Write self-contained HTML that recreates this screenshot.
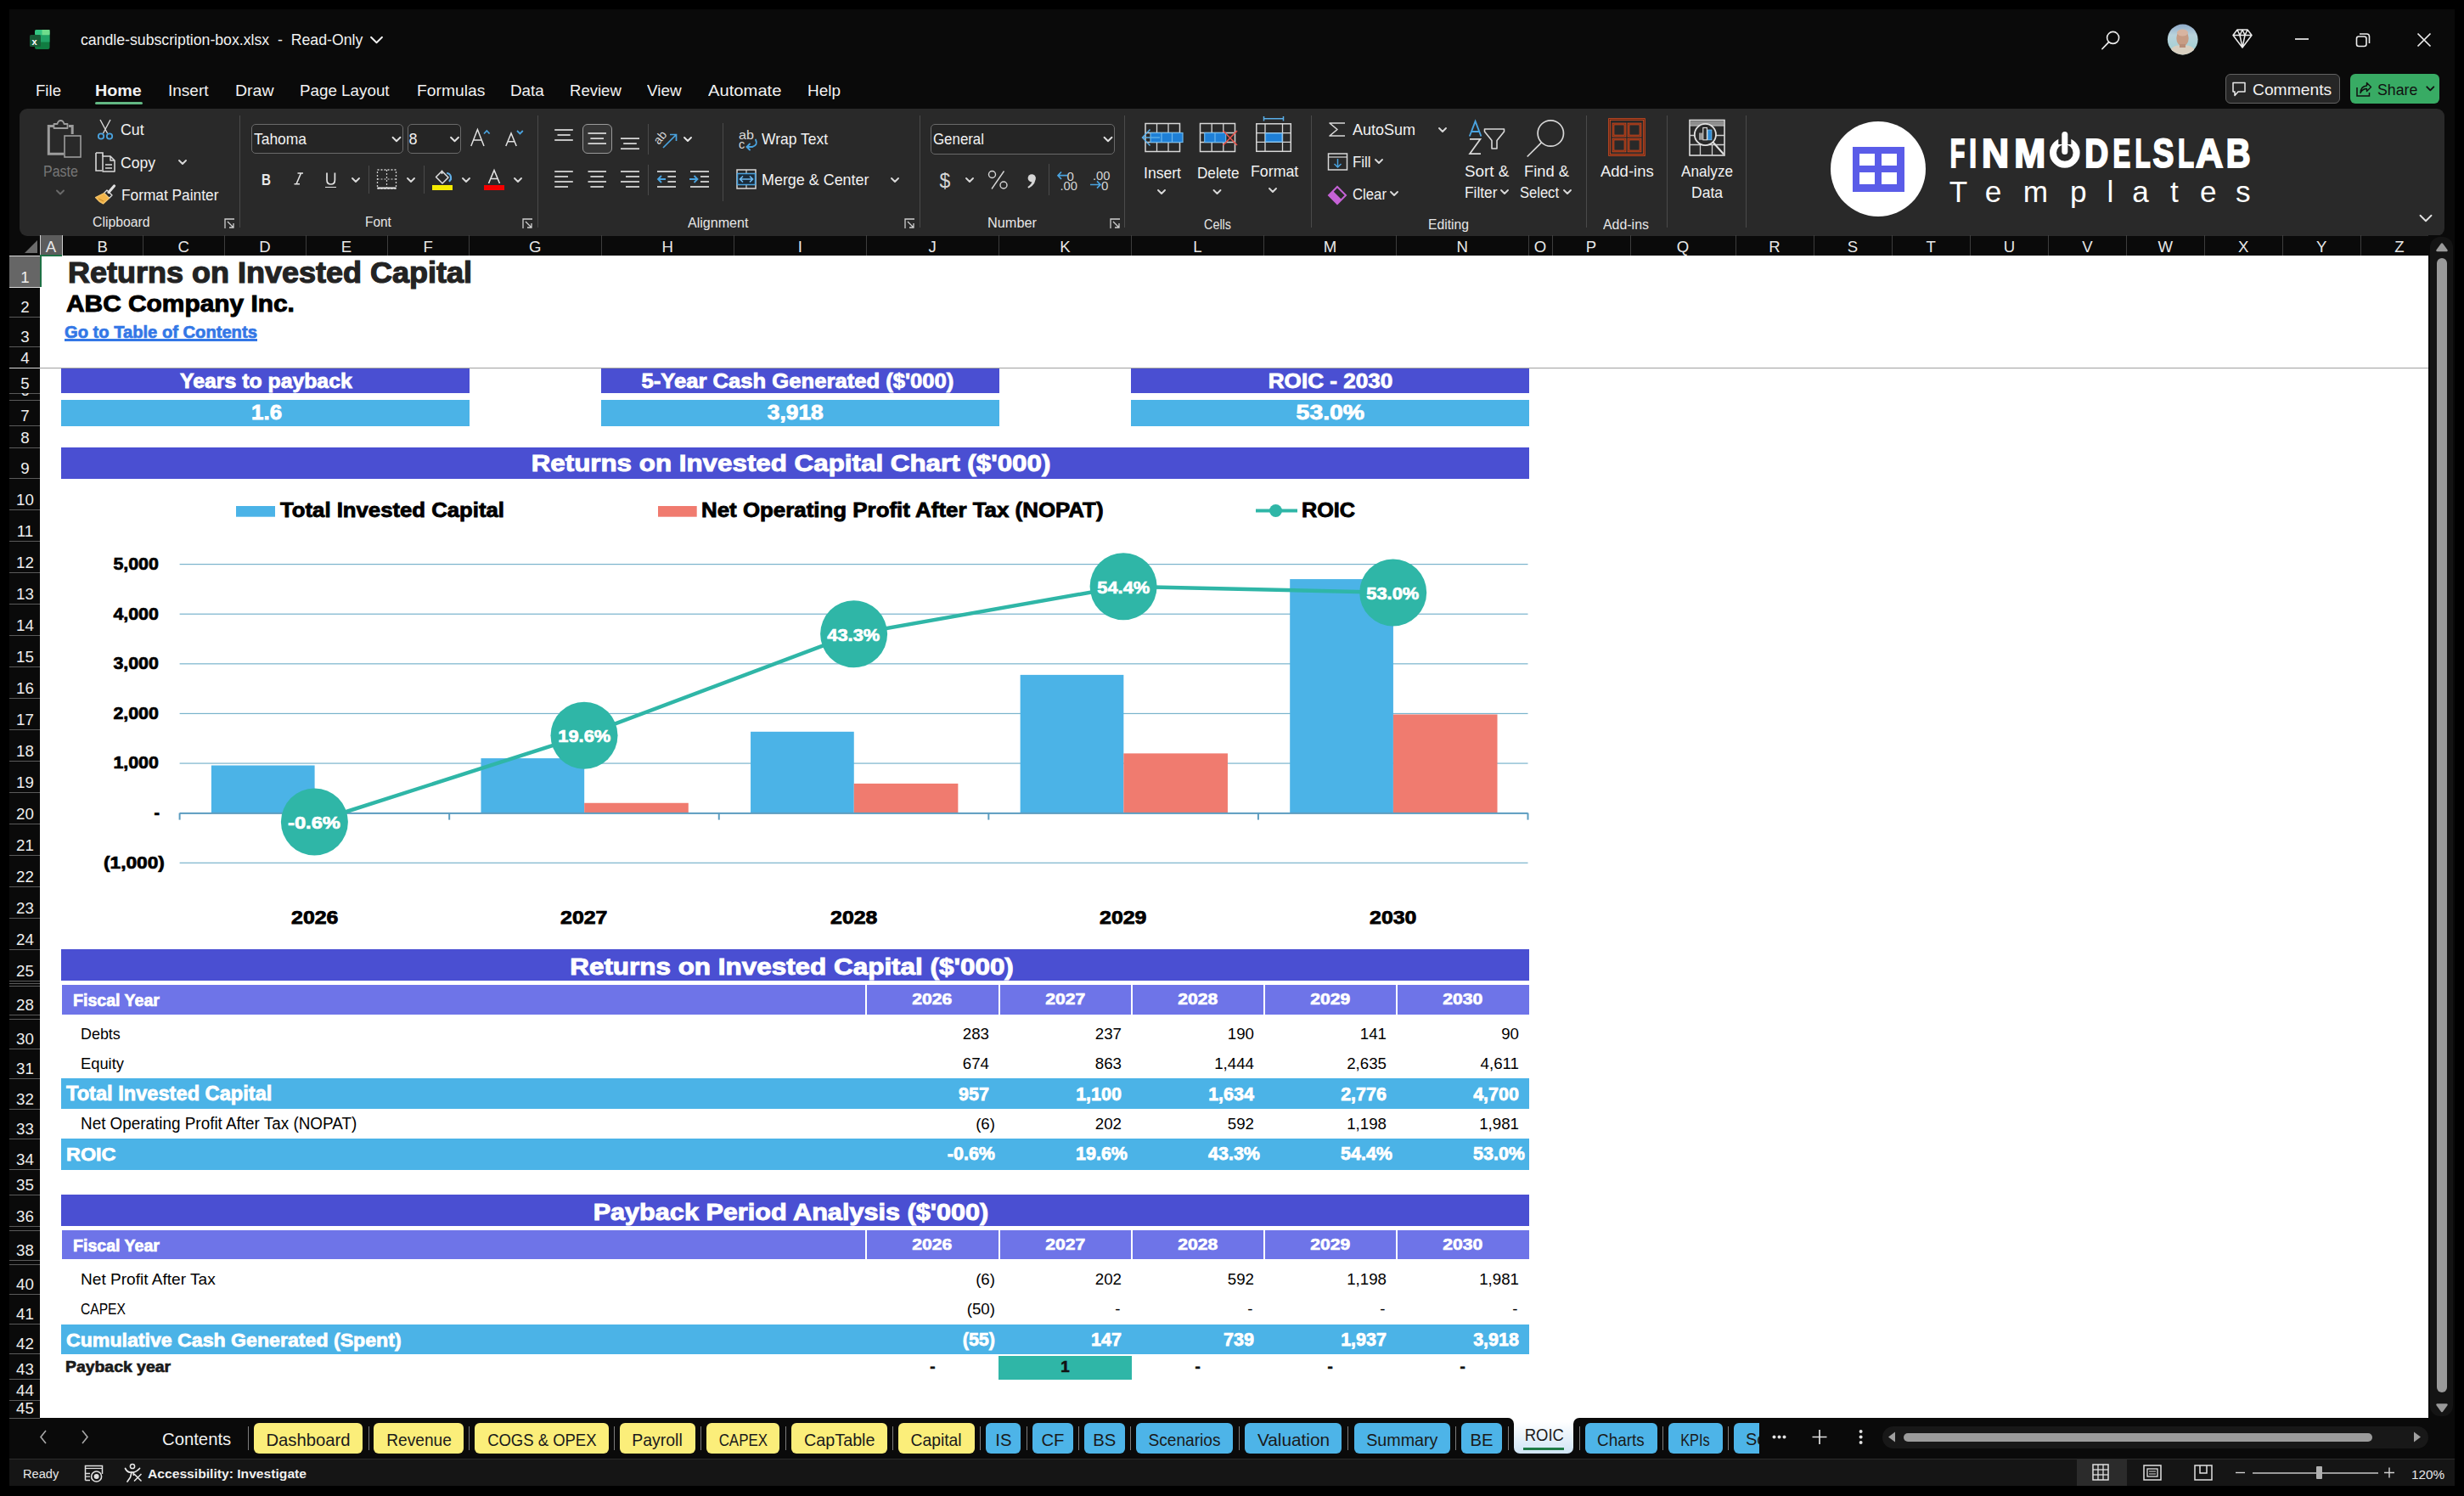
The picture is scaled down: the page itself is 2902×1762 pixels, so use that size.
<!DOCTYPE html>
<html><head><meta charset="utf-8"><title>Excel ROIC</title>
<style>
html,body{margin:0;padding:0;}
body{width:2902px;height:1762px;background:#000;position:relative;overflow:hidden;font-family:"Liberation Sans",sans-serif;}
.t{position:absolute;white-space:pre;line-height:1;}
svg{position:absolute;overflow:visible;}
</style></head><body>

<div style="position:absolute;left:11.00px;top:11.00px;width:2880.00px;height:1739.00px;background:#0a0a0a;"></div>
<div class="t" style="left:95.40px;top:38.87px;font-size:17.88px;color:#f2f2f2;transform:scaleX(0.9904);transform-origin:left 0;">candle-subscription-box.xlsx  -  Read-Only</div>
<div style="position:absolute;left:2621.00px;top:87.20px;width:134.50px;height:35.30px;background:#262626;border:1px solid #626262;border-radius:6px;box-sizing:border-box;"></div>
<div class="t" style="left:2652.60px;top:97.57px;font-size:17.88px;color:#f2f2f2;transform:scaleX(1.0784);transform-origin:left 0;">Comments</div>
<div style="position:absolute;left:2768.40px;top:87.20px;width:104.30px;height:35.30px;background:#38ab64;border-radius:6px;"></div>
<div class="t" style="left:2799.80px;top:97.57px;font-size:17.88px;color:#111111;transform:scaleX(0.9936);transform-origin:left 0;">Share</div>
<div class="t" style="left:42.00px;top:97.28px;font-size:19.27px;color:#f2f2f2;transform:scaleX(0.9659);transform-origin:left 0;">File</div>
<div class="t" style="left:111.60px;top:97.28px;font-size:19.27px;font-weight:700;color:#f2f2f2;transform:scaleX(1.0233);transform-origin:left 0;">Home</div>
<div class="t" style="left:198.00px;top:97.28px;font-size:19.27px;color:#f2f2f2;transform:scaleX(0.9854);transform-origin:left 0;">Insert</div>
<div class="t" style="left:277.00px;top:97.28px;font-size:19.27px;color:#f2f2f2;transform:scaleX(1.0139);transform-origin:left 0;">Draw</div>
<div class="t" style="left:353.00px;top:97.28px;font-size:19.27px;color:#f2f2f2;transform:scaleX(0.9756);transform-origin:left 0;">Page Layout</div>
<div class="t" style="left:491.00px;top:97.28px;font-size:19.27px;color:#f2f2f2;">Formulas</div>
<div class="t" style="left:600.60px;top:97.28px;font-size:19.27px;color:#f2f2f2;transform:scaleX(0.9776);transform-origin:left 0;">Data</div>
<div class="t" style="left:670.50px;top:97.28px;font-size:19.27px;color:#f2f2f2;transform:scaleX(0.9621);transform-origin:left 0;">Review</div>
<div class="t" style="left:762.00px;top:97.28px;font-size:19.27px;color:#f2f2f2;transform:scaleX(0.9824);transform-origin:left 0;">View</div>
<div class="t" style="left:834.00px;top:97.28px;font-size:19.27px;color:#f2f2f2;transform:scaleX(1.0485);transform-origin:left 0;">Automate</div>
<div class="t" style="left:951.00px;top:97.28px;font-size:19.27px;color:#f2f2f2;transform:scaleX(0.9838);transform-origin:left 0;">Help</div>
<div style="position:absolute;left:111.60px;top:120.00px;width:56.80px;height:2.80px;background:#62b783;border-radius:2px;"></div>
<div style="position:absolute;left:23.00px;top:128.00px;width:2855.50px;height:149.90px;background:#292929;border-radius:9px;"></div>
<div class="t" style="left:51.00px;top:194.37px;font-size:17.88px;color:#767676;transform:scaleX(0.8969);transform-origin:left 0;">Paste</div>
<div class="t" style="left:142.00px;top:143.65px;font-size:18.02px;color:#f2f2f2;transform:scaleX(0.9844);transform-origin:left 0;">Cut</div>
<div class="t" style="left:142.00px;top:182.75px;font-size:18.02px;color:#f2f2f2;transform:scaleX(0.9748);transform-origin:left 0;">Copy</div>
<div class="t" style="left:142.60px;top:221.25px;font-size:18.02px;color:#f2f2f2;transform:scaleX(0.9601);transform-origin:left 0;">Format Painter</div>
<div class="t" style="left:109.00px;top:254.34px;font-size:15.78px;color:#e6e6e6;">Clipboard</div>
<div style="position:absolute;left:282.20px;top:135.60px;width:1.00px;height:132.10px;background:#4a4a4a;"></div>
<div style="position:absolute;left:295.50px;top:146.00px;width:179.50px;height:35.00px;background:#252525;border:1px solid #6a6a6a;border-radius:5px;box-sizing:border-box;"></div>
<div class="t" style="left:299.00px;top:154.75px;font-size:18.02px;color:#f2f2f2;transform:scaleX(0.9673);transform-origin:left 0;">Tahoma</div>
<div style="position:absolute;left:479.50px;top:146.00px;width:63.50px;height:35.00px;background:#252525;border:1px solid #6a6a6a;border-radius:5px;box-sizing:border-box;"></div>
<div class="t" style="left:481.50px;top:154.75px;font-size:18.02px;color:#f2f2f2;">8</div>
<div class="t" style="left:308.00px;top:203.62px;font-size:17.46px;font-weight:700;color:#e8e8e8;transform:scaleX(0.8725);transform-origin:left 0;">B</div>
<div style="position:absolute;left:383.30px;top:219.50px;width:13.20px;height:1.80px;background:#e2e2e2;"></div>
<div style="position:absolute;left:434.20px;top:195.00px;width:1.00px;height:33.00px;background:#4a4a4a;"></div>
<div style="position:absolute;left:498.50px;top:195.00px;width:1.00px;height:33.00px;background:#4a4a4a;"></div>
<div style="position:absolute;left:508.70px;top:218.00px;width:24.20px;height:5.80px;background:#f5eb00;"></div>
<div style="position:absolute;left:569.80px;top:218.00px;width:24.20px;height:5.80px;background:#f40000;"></div>
<div class="t" style="left:430.00px;top:254.34px;font-size:15.78px;color:#e6e6e6;transform:scaleX(0.9753);transform-origin:left 0;">Font</div>
<div style="position:absolute;left:633.00px;top:135.60px;width:1.00px;height:132.10px;background:#4a4a4a;"></div>
<div style="position:absolute;left:685.50px;top:146.20px;width:35.50px;height:35.20px;background:#363636;border:1px solid #9a9a9a;border-radius:6px;box-sizing:border-box;"></div>
<div style="position:absolute;left:763.00px;top:145.70px;width:1.00px;height:36.30px;background:#4a4a4a;"></div>
<div style="position:absolute;left:763.00px;top:194.00px;width:1.00px;height:36.00px;background:#4a4a4a;"></div>
<div style="position:absolute;left:851.10px;top:145.00px;width:1.00px;height:92.00px;background:#4a4a4a;"></div>
<div class="t" style="left:897.00px;top:155.13px;font-size:18.16px;color:#f2f2f2;transform:scaleX(0.9621);transform-origin:left 0;">Wrap Text</div>
<div class="t" style="left:897.00px;top:203.13px;font-size:18.16px;color:#f2f2f2;transform:scaleX(0.9870);transform-origin:left 0;">Merge &amp; Center</div>
<div class="t" style="left:810.00px;top:255.14px;font-size:15.78px;color:#e6e6e6;transform:scaleX(1.0188);transform-origin:left 0;">Alignment</div>
<div style="position:absolute;left:1082.50px;top:135.60px;width:1.00px;height:132.10px;background:#4a4a4a;"></div>
<div style="position:absolute;left:1096.00px;top:146.00px;width:217.00px;height:36.00px;background:#252525;border:1px solid #6a6a6a;border-radius:5px;box-sizing:border-box;"></div>
<div class="t" style="left:1099.00px;top:154.75px;font-size:18.02px;color:#f2f2f2;transform:scaleX(0.9361);transform-origin:left 0;">General</div>
<div style="position:absolute;left:1234.50px;top:193.00px;width:1.00px;height:37.00px;background:#4a4a4a;"></div>
<div class="t" style="left:1163.00px;top:254.64px;font-size:15.78px;color:#e6e6e6;transform:scaleX(1.0333);transform-origin:left 0;">Number</div>
<div style="position:absolute;left:1324.20px;top:135.60px;width:1.00px;height:132.10px;background:#4a4a4a;"></div>
<div class="t" style="left:1347.00px;top:194.75px;font-size:18.02px;color:#f2f2f2;transform:scaleX(0.9765);transform-origin:left 0;">Insert</div>
<div class="t" style="left:1409.50px;top:194.75px;font-size:18.02px;color:#f2f2f2;transform:scaleX(0.9504);transform-origin:left 0;">Delete</div>
<div class="t" style="left:1472.70px;top:193.05px;font-size:18.02px;color:#f2f2f2;transform:scaleX(0.9867);transform-origin:left 0;">Format</div>
<div class="t" style="left:1418.00px;top:256.64px;font-size:15.78px;color:#e6e6e6;transform:scaleX(0.9122);transform-origin:left 0;">Cells</div>
<div style="position:absolute;left:1544.00px;top:135.60px;width:1.00px;height:132.10px;background:#4a4a4a;"></div>
<div class="t" style="left:1593.00px;top:143.75px;font-size:18.02px;color:#f2f2f2;">AutoSum</div>
<div class="t" style="left:1593.00px;top:182.25px;font-size:18.02px;color:#f2f2f2;transform:scaleX(0.9385);transform-origin:left 0;">Fill</div>
<div class="t" style="left:1593.00px;top:219.75px;font-size:18.02px;color:#f2f2f2;transform:scaleX(0.9290);transform-origin:left 0;">Clear</div>
<div class="t" style="left:1724.70px;top:192.75px;font-size:18.02px;color:#f2f2f2;transform:scaleX(1.0446);transform-origin:left 0;">Sort &amp;</div>
<div class="t" style="left:1724.70px;top:217.75px;font-size:18.02px;color:#f2f2f2;transform:scaleX(0.9616);transform-origin:left 0;">Filter</div>
<div class="t" style="left:1795.00px;top:192.75px;font-size:18.02px;color:#f2f2f2;transform:scaleX(1.0178);transform-origin:left 0;">Find &amp;</div>
<div class="t" style="left:1790.00px;top:217.75px;font-size:18.02px;color:#f2f2f2;transform:scaleX(0.9186);transform-origin:left 0;">Select</div>
<div class="t" style="left:1682.00px;top:256.64px;font-size:15.78px;color:#e6e6e6;transform:scaleX(0.9947);transform-origin:left 0;">Editing</div>
<div style="position:absolute;left:1867.90px;top:135.60px;width:1.00px;height:132.10px;background:#4a4a4a;"></div>
<div class="t" style="left:1885.00px;top:192.75px;font-size:18.02px;color:#f2f2f2;transform:scaleX(1.0264);transform-origin:left 0;">Add-ins</div>
<div class="t" style="left:1887.50px;top:256.64px;font-size:15.78px;color:#e6e6e6;transform:scaleX(1.0091);transform-origin:left 0;">Add-ins</div>
<div style="position:absolute;left:1963.20px;top:135.60px;width:1.00px;height:132.10px;background:#4a4a4a;"></div>
<div class="t" style="left:1980.00px;top:192.75px;font-size:18.02px;color:#f2f2f2;transform:scaleX(0.9517);transform-origin:left 0;">Analyze</div>
<div class="t" style="left:1992.00px;top:217.75px;font-size:18.02px;color:#f2f2f2;transform:scaleX(0.9722);transform-origin:left 0;">Data</div>
<div style="position:absolute;left:2056.10px;top:135.60px;width:1.00px;height:132.10px;background:#4a4a4a;"></div>
<div class="t" style="left:2290.65px;top:156.80px;font-size:47.49px;font-weight:700;color:#fff;transform:scaleX(0.6033);transform-origin:center 0;-webkit-text-stroke:2.1px #fff;">F</div>
<div class="t" style="left:2316.75px;top:156.80px;font-size:47.49px;font-weight:700;color:#fff;transform:scaleX(0.6594);transform-origin:center 0;-webkit-text-stroke:2.1px #fff;">I</div>
<div class="t" style="left:2332.70px;top:156.80px;font-size:47.49px;font-weight:700;color:#fff;transform:scaleX(0.9360);transform-origin:center 0;-webkit-text-stroke:2.1px #fff;">N</div>
<div class="t" style="left:2370.67px;top:156.80px;font-size:47.49px;font-weight:700;color:#fff;transform:scaleX(0.9328);transform-origin:center 0;-webkit-text-stroke:2.1px #fff;">M</div>
<div class="t" style="left:2451.55px;top:156.80px;font-size:47.49px;font-weight:700;color:#fff;transform:scaleX(0.8165);transform-origin:center 0;-webkit-text-stroke:2.1px #fff;">D</div>
<div class="t" style="left:2483.31px;top:156.80px;font-size:47.49px;font-weight:700;color:#fff;transform:scaleX(0.6536);transform-origin:center 0;-webkit-text-stroke:2.1px #fff;">E</div>
<div class="t" style="left:2509.40px;top:156.80px;font-size:47.49px;font-weight:700;color:#fff;transform:scaleX(0.6274);transform-origin:center 0;-webkit-text-stroke:2.1px #fff;">L</div>
<div class="t" style="left:2531.56px;top:156.80px;font-size:47.49px;font-weight:700;color:#fff;transform:scaleX(0.7830);transform-origin:center 0;-webkit-text-stroke:2.1px #fff;">S</div>
<div class="t" style="left:2560.00px;top:156.80px;font-size:47.49px;font-weight:700;color:#fff;transform:scaleX(0.6550);transform-origin:center 0;-webkit-text-stroke:2.1px #fff;">L</div>
<div class="t" style="left:2585.00px;top:156.80px;font-size:47.49px;font-weight:700;color:#fff;transform:scaleX(0.9419);transform-origin:center 0;-webkit-text-stroke:2.1px #fff;">A</div>
<div class="t" style="left:2619.25px;top:156.80px;font-size:47.49px;font-weight:700;color:#fff;transform:scaleX(0.8398);transform-origin:center 0;-webkit-text-stroke:2.1px #fff;">B</div>
<div class="t" style="left:2295.65px;top:207.61px;font-size:35.20px;color:#fff;">T</div>
<div class="t" style="left:2337.71px;top:207.61px;font-size:35.20px;color:#fff;">e</div>
<div class="t" style="left:2382.64px;top:207.61px;font-size:35.20px;color:#fff;">m</div>
<div class="t" style="left:2437.91px;top:207.61px;font-size:35.20px;color:#fff;">p</div>
<div class="t" style="left:2481.49px;top:207.61px;font-size:35.20px;color:#fff;">l</div>
<div class="t" style="left:2511.21px;top:207.61px;font-size:35.20px;color:#fff;">a</div>
<div class="t" style="left:2556.01px;top:207.61px;font-size:35.20px;color:#fff;">t</div>
<div class="t" style="left:2590.91px;top:207.61px;font-size:35.20px;color:#fff;">e</div>
<div class="t" style="left:2632.90px;top:207.61px;font-size:35.20px;color:#fff;">s</div>
<div style="position:absolute;left:2860.00px;top:277.00px;width:31.00px;height:1393.00px;background:#0a0a0a;"></div>
<div style="position:absolute;left:2862.00px;top:279.00px;width:27.00px;height:1389.00px;background:#141414;border-radius:12px;"></div>
<div style="position:absolute;left:2870.00px;top:304.00px;width:12.00px;height:1336.00px;background:#9a9a9a;border-radius:6px;"></div>
<div style="position:absolute;left:1760.00px;top:1664.00px;width:120.00px;height:26.00px;background:#ffffff;"></div>
<div style="position:absolute;left:11.00px;top:1670.00px;width:1771.80px;height:48.00px;background:#0a0a0a;border-top-right-radius:7px;"></div>
<div style="position:absolute;left:1853.40px;top:1670.00px;width:1037.60px;height:48.00px;background:#0a0a0a;border-top-left-radius:7px;"></div>
<div style="position:absolute;left:1770.00px;top:1700.00px;width:96.00px;height:18.00px;background:#0a0a0a;"></div>
<div class="t" style="left:190.70px;top:1685.89px;font-size:19.97px;color:#f2f2f2;transform:scaleX(1.0170);transform-origin:left 0;">Contents</div>
<div style="position:absolute;left:292.00px;top:1680.00px;width:1.00px;height:28.00px;background:#7c7c7c;"></div>
<div style="position:absolute;left:299.00px;top:1676.00px;width:128.00px;height:35.50px;background:#fbee7a;border-radius:6px;"></div>
<div class="t" style="left:313.46px;top:1685.56px;font-size:20.25px;color:#1a1a1a;">Dashboard</div>
<div style="position:absolute;left:434.00px;top:1680.00px;width:1.00px;height:28.00px;background:#7c7c7c;"></div>
<div style="position:absolute;left:440.30px;top:1676.00px;width:105.60px;height:35.50px;background:#fbee7a;border-radius:6px;"></div>
<div class="t" style="left:452.57px;top:1685.56px;font-size:20.25px;color:#1a1a1a;transform:scaleX(0.9449);transform-origin:center 0;">Revenue</div>
<div style="position:absolute;left:552.00px;top:1680.00px;width:1.00px;height:28.00px;background:#7c7c7c;"></div>
<div style="position:absolute;left:559.30px;top:1676.00px;width:157.40px;height:35.50px;background:#fbee7a;border-radius:6px;"></div>
<div class="t" style="left:567.66px;top:1685.56px;font-size:20.25px;color:#1a1a1a;transform:scaleX(0.9127);transform-origin:center 0;">COGS &amp; OPEX</div>
<div style="position:absolute;left:723.00px;top:1680.00px;width:1.00px;height:28.00px;background:#7c7c7c;"></div>
<div style="position:absolute;left:730.00px;top:1676.00px;width:88.60px;height:35.50px;background:#fbee7a;border-radius:6px;"></div>
<div class="t" style="left:743.35px;top:1685.56px;font-size:20.25px;color:#1a1a1a;transform:scaleX(0.9628);transform-origin:center 0;">Payroll</div>
<div style="position:absolute;left:825.00px;top:1680.00px;width:1.00px;height:28.00px;background:#7c7c7c;"></div>
<div style="position:absolute;left:832.00px;top:1676.00px;width:86.40px;height:35.50px;background:#fbee7a;border-radius:6px;"></div>
<div class="t" style="left:840.87px;top:1685.56px;font-size:20.25px;color:#1a1a1a;transform:scaleX(0.8361);transform-origin:center 0;">CAPEX</div>
<div style="position:absolute;left:925.00px;top:1680.00px;width:1.00px;height:28.00px;background:#7c7c7c;"></div>
<div style="position:absolute;left:932.20px;top:1676.00px;width:112.40px;height:35.50px;background:#fbee7a;border-radius:6px;"></div>
<div class="t" style="left:945.62px;top:1685.56px;font-size:20.25px;color:#1a1a1a;transform:scaleX(0.9747);transform-origin:center 0;">CapTable</div>
<div style="position:absolute;left:1051.00px;top:1680.00px;width:1.00px;height:28.00px;background:#7c7c7c;"></div>
<div style="position:absolute;left:1058.40px;top:1676.00px;width:89.20px;height:35.50px;background:#fbee7a;border-radius:6px;"></div>
<div class="t" style="left:1071.48px;top:1685.56px;font-size:20.25px;color:#1a1a1a;transform:scaleX(0.9549);transform-origin:center 0;">Capital</div>
<div style="position:absolute;left:1154.00px;top:1680.00px;width:1.00px;height:28.00px;background:#7c7c7c;"></div>
<div style="position:absolute;left:1161.40px;top:1676.00px;width:41.00px;height:35.50px;background:#4db4e8;border-radius:6px;"></div>
<div class="t" style="left:1172.33px;top:1685.56px;font-size:20.25px;color:#1a1a1a;">IS</div>
<div style="position:absolute;left:1209.00px;top:1680.00px;width:1.00px;height:28.00px;background:#7c7c7c;"></div>
<div style="position:absolute;left:1216.20px;top:1676.00px;width:47.50px;height:35.50px;background:#4db4e8;border-radius:6px;"></div>
<div class="t" style="left:1226.45px;top:1685.56px;font-size:20.25px;color:#1a1a1a;">CF</div>
<div style="position:absolute;left:1270.00px;top:1680.00px;width:1.00px;height:28.00px;background:#7c7c7c;"></div>
<div style="position:absolute;left:1277.00px;top:1676.00px;width:47.60px;height:35.50px;background:#4db4e8;border-radius:6px;"></div>
<div class="t" style="left:1287.29px;top:1685.56px;font-size:20.25px;color:#1a1a1a;">BS</div>
<div style="position:absolute;left:1331.00px;top:1680.00px;width:1.00px;height:28.00px;background:#7c7c7c;"></div>
<div style="position:absolute;left:1338.40px;top:1676.00px;width:114.00px;height:35.50px;background:#4db4e8;border-radius:6px;"></div>
<div class="t" style="left:1350.37px;top:1685.56px;font-size:20.25px;color:#1a1a1a;transform:scaleX(0.9439);transform-origin:center 0;">Scenarios</div>
<div style="position:absolute;left:1459.00px;top:1680.00px;width:1.00px;height:28.00px;background:#7c7c7c;"></div>
<div style="position:absolute;left:1466.20px;top:1676.00px;width:114.10px;height:35.50px;background:#4db4e8;border-radius:6px;"></div>
<div class="t" style="left:1481.78px;top:1685.56px;font-size:20.25px;color:#1a1a1a;transform:scaleX(1.0260);transform-origin:center 0;">Valuation</div>
<div style="position:absolute;left:1587.00px;top:1680.00px;width:1.00px;height:28.00px;background:#7c7c7c;"></div>
<div style="position:absolute;left:1594.50px;top:1676.00px;width:113.20px;height:35.50px;background:#4db4e8;border-radius:6px;"></div>
<div class="t" style="left:1607.78px;top:1685.56px;font-size:20.25px;color:#1a1a1a;transform:scaleX(0.9718);transform-origin:center 0;">Summary</div>
<div style="position:absolute;left:1714.00px;top:1680.00px;width:1.00px;height:28.00px;background:#7c7c7c;"></div>
<div style="position:absolute;left:1721.00px;top:1676.00px;width:48.00px;height:35.50px;background:#4db4e8;border-radius:6px;"></div>
<div class="t" style="left:1731.49px;top:1685.56px;font-size:20.25px;color:#1a1a1a;">BE</div>
<div style="position:absolute;left:1776.00px;top:1680.00px;width:1.00px;height:28.00px;background:#7c7c7c;"></div>
<div style="position:absolute;left:1782.80px;top:1668.00px;width:70.60px;height:44.00px;background:linear-gradient(#ffffff 15%,#cfe4f5);border-radius:0 0 7px 7px;"></div>
<div class="t" style="left:1793.71px;top:1680.91px;font-size:19.83px;color:#1a1a1a;transform:scaleX(0.9318);transform-origin:center 0;">ROIC</div>
<div style="position:absolute;left:1794.00px;top:1705.00px;width:48.00px;height:3.20px;background:#1e7b45;"></div>
<div style="position:absolute;left:1860.00px;top:1680.00px;width:1.00px;height:28.00px;background:#7c7c7c;"></div>
<div style="position:absolute;left:1867.00px;top:1676.00px;width:84.60px;height:35.50px;background:#4db4e8;border-radius:6px;"></div>
<div class="t" style="left:1879.48px;top:1685.56px;font-size:20.25px;color:#1a1a1a;transform:scaleX(0.9321);transform-origin:center 0;">Charts</div>
<div style="position:absolute;left:1958.00px;top:1680.00px;width:1.00px;height:28.00px;background:#7c7c7c;"></div>
<div style="position:absolute;left:1965.00px;top:1676.00px;width:63.50px;height:35.50px;background:#4db4e8;border-radius:6px;"></div>
<div class="t" style="left:1975.37px;top:1685.56px;font-size:20.25px;color:#1a1a1a;transform:scaleX(0.8067);transform-origin:center 0;">KPIs</div>
<div style="position:absolute;left:2035.00px;top:1680.00px;width:1.00px;height:28.00px;background:#7c7c7c;"></div>
<div style="position:absolute;left:2042px;top:1676px;width:29.6px;height:35.5px;overflow:hidden;border-radius:6px 0 0 6px;background:#4db4e8">
<div class="t" style="left:14.00px;top:9.89px;font-size:19.97px;color:#1a1a1a;">Scorecard</div>
</div>
<div style="position:absolute;left:2217.00px;top:1680.00px;width:643.00px;height:25.50px;background:#181818;border-radius:13px;"></div>
<div style="position:absolute;left:2242.00px;top:1687.60px;width:551.60px;height:10.80px;background:#9b9b9b;border-radius:6px;"></div>
<div style="position:absolute;left:11.00px;top:1718.00px;width:2880.00px;height:32.00px;background:#151515;"></div>
<div style="position:absolute;left:11.00px;top:1718.00px;width:2880.00px;height:1.00px;background:#2c2c2c;"></div>
<div class="t" style="left:27.40px;top:1727.93px;font-size:15.08px;color:#e8e8e8;transform:scaleX(0.9678);transform-origin:left 0;">Ready</div>
<div class="t" style="left:173.50px;top:1727.93px;font-size:15.08px;font-weight:700;color:#f0f0f0;transform:scaleX(1.0380);transform-origin:left 0;">Accessibility: Investigate</div>
<div style="position:absolute;left:2445.60px;top:1718.00px;width:59.00px;height:32.00px;background:#2b2b2b;"></div>
<div style="position:absolute;left:2652.70px;top:1734.00px;width:148.30px;height:1.50px;background:#9a9a9a;"></div>
<div style="position:absolute;left:2728.00px;top:1727.00px;width:7.00px;height:15.00px;background:#b0b0b0;border-radius:1px;"></div>
<div class="t" style="left:2839.80px;top:1728.73px;font-size:15.08px;color:#e8e8e8;transform:scaleX(1.0161);transform-origin:left 0;">120%</div>
<svg style="left:0;top:0" width="2902" height="1762"><rect x="41" y="35" width="17.5" height="23" rx="2" fill="#107c41"/>
<rect x="41" y="35" width="17.5" height="6.5" rx="2" fill="#33c481"/>
<rect x="49.5" y="35" width="9" height="6.5" fill="#6fdc8c"/>
<rect x="41" y="41.5" width="17.5" height="8" fill="#21a366"/>
<rect x="35" y="41" width="13" height="14" rx="1.5" fill="#185c37"/>
<text x="37.6" y="52.5" font-family="Liberation Sans" font-weight="700" font-size="11" fill="#fff">x</text>
<polyline points="437.0,43.8 443.5,50.2 450.0,43.8" fill="none" stroke="#f2f2f2" stroke-width="1.9" stroke-linecap="round" stroke-linejoin="round"/>
<circle cx="2488.6" cy="44.4" r="7" fill="none" stroke="#ececec" stroke-width="1.6"/>
<line x1="2483.6" y1="49.6" x2="2476" y2="57.5" stroke="#ececec" stroke-width="1.8" stroke-linecap="round"/>
<defs><clipPath id="avc"><circle cx="2570.7" cy="46.5" r="17.9"/></clipPath><linearGradient id="avbg" x1="0" y1="0" x2="0" y2="1"><stop offset="0" stop-color="#8ea9c9"/><stop offset="0.35" stop-color="#b9d3dc"/><stop offset="1" stop-color="#9ccfd0"/></linearGradient></defs>
<g clip-path="url(#avc)"><rect x="2552" y="28" width="38" height="38" fill="url(#avbg)"/>
<ellipse cx="2570.5" cy="45" rx="7.2" ry="9.5" fill="#c79c84"/><ellipse cx="2570.5" cy="38.5" rx="6.5" ry="4" fill="#d8b4a0"/>
<path d="M2552,66 Q2556,55 2564,53.5 L2577,53.5 Q2585,55 2589,66 Z" fill="#d9cfc0"/><rect x="2567" y="52" width="7" height="4" fill="#b88d77"/></g>
<path d="M2630,41.5 L2635,35 L2647,35 L2652,41.5 L2641,56 Z M2630,41.5 L2652,41.5 M2635,35 L2638,41.5 L2641,35 L2644,41.5 L2647,35 M2638,41.5 L2641,56 L2644,41.5" fill="none" stroke="#ececec" stroke-width="1.5" stroke-linejoin="round"/>
<line x1="2703" y1="46" x2="2719" y2="46" stroke="#ececec" stroke-width="1.7"/>
<rect x="2775.5" y="43" width="11.5" height="11.5" rx="2.5" fill="none" stroke="#ececec" stroke-width="1.6"/>
<path d="M2779,40 L2787.5,40 Q2790.5,40 2790.5,43 L2790.5,51" fill="none" stroke="#ececec" stroke-width="1.6"/>
<path d="M2847.5,39.5 L2862.5,54.5 M2862.5,39.5 L2847.5,54.5" stroke="#ececec" stroke-width="1.7"/>
<path d="M2630,97.5 L2644,97.5 L2644,108 L2636,108 L2632,112.5 L2632,108 L2630,108 Z" fill="none" stroke="#eaeaea" stroke-width="1.5" stroke-linejoin="round"/>
<path d="M2776,103 L2776,113 L2790.5,113 L2790.5,109" fill="none" stroke="#111" stroke-width="1.5"/>
<path d="M2780,109.5 Q2780.5,101.5 2787.5,101 L2787.5,97.5 L2792.5,102.5 L2787.5,107.5 L2787.5,104.5 Q2782.5,104.5 2780,109.5Z" fill="none" stroke="#111" stroke-width="1.4" stroke-linejoin="round"/>
<polyline points="2858.3,102.3 2862.3,106.3 2866.3,102.3" fill="none" stroke="#111" stroke-width="1.9" stroke-linecap="round" stroke-linejoin="round"/>
<path d="M63,148.5 L57.3,148.5 L57.3,181.3 L75,181.3" fill="none" stroke="#9c9c9c" stroke-width="3"/>
<path d="M81,148.5 L85.2,148.5 L85.2,158" fill="none" stroke="#9c9c9c" stroke-width="3"/>
<path d="M63.5,151 L63.5,146 L67.5,146 Q68.5,142 71.5,142 Q74.5,142 75.5,146 L79.5,146 L79.5,151 Z" fill="none" stroke="#9c9c9c" stroke-width="1.8" stroke-linejoin="round"/>
<rect x="76" y="160" width="19" height="25" fill="none" stroke="#9c9c9c" stroke-width="1.6"/>
<polyline points="67.0,224.5 71.0,228.5 75.0,224.5" fill="none" stroke="#6a6a6a" stroke-width="1.9" stroke-linecap="round" stroke-linejoin="round"/>
<path d="M118,141 L126.5,157 M130,141 L121.5,157" stroke="#d9d9d9" stroke-width="1.4"/>
<circle cx="119" cy="160.5" r="3.2" fill="none" stroke="#4aa3df" stroke-width="1.8"/><circle cx="129" cy="160.5" r="3.2" fill="none" stroke="#4aa3df" stroke-width="1.8"/>
<path d="M113,180 L121,180 L121,184 M113,180 L113,201 L120,201" fill="none" stroke="#d9d9d9" stroke-width="1.6"/>
<path d="M121,184 L130,184 L135,189 L135,202 L121,202 Z M130,184 L130,189 L135,189 M124,194 L132,194 M124,198 L132,198" fill="none" stroke="#d9d9d9" stroke-width="1.5" stroke-linejoin="round"/>
<polyline points="211.0,189.0 215.0,193.0 219.0,189.0" fill="none" stroke="#d9d9d9" stroke-width="1.9" stroke-linecap="round" stroke-linejoin="round"/>
<path d="M134.5,219 L128,226.5" stroke="#e0e0e0" stroke-width="3.2" stroke-linecap="round"/>
<path d="M126,224 L132,230 L128.5,233.5 L122.5,227.5 Z" fill="none" stroke="#e0e0e0" stroke-width="1.4" stroke-linejoin="round"/>
<path d="M122.5,227.5 L128.5,233.5 L121.5,240 Q117,238 112.5,232.5 Z" fill="#f3b54a" stroke="#f3c46a" stroke-width="1.2" stroke-linejoin="round"/>
<path d="M116,234 L122,237" stroke="#c78a2a" stroke-width="1"/>
<path d="M265,269 L265,258 L276,258 M268,261 L275,268 M275,263 L275,268 L270,268" fill="none" stroke="#cfcfcf" stroke-width="1.3"/>
<polyline points="462.5,161.8 467.0,166.2 471.5,161.8" fill="none" stroke="#e0e0e0" stroke-width="1.9" stroke-linecap="round" stroke-linejoin="round"/>
<polyline points="531.0,161.8 535.5,166.2 540.0,161.8" fill="none" stroke="#e0e0e0" stroke-width="1.9" stroke-linecap="round" stroke-linejoin="round"/>
<path d="M554.8,172 L562.4,152.5 L570,172 M557.6,165 L567.2,165" fill="none" stroke="#e2e2e2" stroke-width="1.5"/>
<polyline points="570,157.5 573.3,154 576.6,157.5" fill="none" stroke="#4aa3df" stroke-width="1.8"/>
<path d="M595.8,172 L602,157 L608.2,172 M598,166.8 L606,166.8" fill="none" stroke="#e2e2e2" stroke-width="1.5"/>
<polyline points="609,154 612.4,157.5 615.8,154" fill="none" stroke="#4aa3df" stroke-width="1.8"/>
<path d="M350.5,204 L357,204 M346.5,216.8 L353,216.8 M354.5,204 L349,216.8" fill="none" stroke="#e2e2e2" stroke-width="1.6"/>
<path d="M385,203.5 L385,212 Q385,217 389.7,217 Q394.4,217 394.4,212 L394.4,203.5" fill="none" stroke="#e2e2e2" stroke-width="1.7"/>
<polyline points="415.0,210.0 419.0,214.0 423.0,210.0" fill="none" stroke="#d9d9d9" stroke-width="1.9" stroke-linecap="round" stroke-linejoin="round"/>
<rect x="444.5" y="200" width="22" height="22" fill="none" stroke="#cfcfcf" stroke-width="1.3" stroke-dasharray="2,2"/>
<line x1="444.5" y1="221.5" x2="466.5" y2="221.5" stroke="#e8e8e8" stroke-width="2"/>
<line x1="455.5" y1="200" x2="455.5" y2="222" stroke="#cfcfcf" stroke-width="1.2" stroke-dasharray="2,2"/><line x1="444.5" y1="211" x2="466.5" y2="211" stroke="#cfcfcf" stroke-width="1.2" stroke-dasharray="2,2"/>
<polyline points="480.0,210.0 484.0,214.0 488.0,210.0" fill="none" stroke="#d9d9d9" stroke-width="1.9" stroke-linecap="round" stroke-linejoin="round"/>
<path d="M520.5,200.5 L520.5,205 M513.5,208.5 L520.5,201.5 L528,209 L521,216 Z" fill="none" stroke="#e0e0e0" stroke-width="1.5" stroke-linejoin="round"/>
<path d="M527,204 Q531.5,205 531,211 L529.5,213" fill="none" stroke="#62b0e8" stroke-width="2.2" stroke-linecap="round"/>
<polyline points="545.0,210.0 549.0,214.0 553.0,210.0" fill="none" stroke="#d9d9d9" stroke-width="1.9" stroke-linecap="round" stroke-linejoin="round"/>
<path d="M575.5,216 L582,200.5 L588.5,216 M577.8,210.5 L586.2,210.5" fill="none" stroke="#e2e2e2" stroke-width="1.6"/>
<polyline points="606.0,210.0 610.0,214.0 614.0,210.0" fill="none" stroke="#d9d9d9" stroke-width="1.9" stroke-linecap="round" stroke-linejoin="round"/>
<path d="M616,269 L616,258 L627,258 M619,261 L626,268 M626,263 L626,268 L621,268" fill="none" stroke="#cfcfcf" stroke-width="1.3"/>
<line x1="653.2" y1="153" x2="674.8" y2="153" stroke="#dedede" stroke-width="1.7"/>
<line x1="653.2" y1="165" x2="674.8" y2="165" stroke="#dedede" stroke-width="1.7"/>
<line x1="656.5" y1="159" x2="671.7" y2="159" stroke="#dedede" stroke-width="1.7"/>
<line x1="692.5" y1="157" x2="714" y2="157" stroke="#dedede" stroke-width="1.7"/>
<line x1="692.5" y1="169.1" x2="714" y2="169.1" stroke="#dedede" stroke-width="1.7"/>
<line x1="695.4" y1="163.1" x2="711" y2="163.1" stroke="#dedede" stroke-width="1.7"/>
<line x1="731" y1="163.1" x2="753" y2="163.1" stroke="#dedede" stroke-width="1.7"/>
<line x1="731" y1="175.2" x2="753" y2="175.2" stroke="#dedede" stroke-width="1.7"/>
<line x1="734.2" y1="169.1" x2="749.8" y2="169.1" stroke="#dedede" stroke-width="1.7"/>
<text x="0" y="0" font-family="Liberation Sans" font-size="14" fill="#d8d8d8" transform="translate(776 171) rotate(-50)">ab</text>
<path d="M781,174 L796,159 M789,158.5 L796.5,158.5 L796.5,166" fill="none" stroke="#4aa3df" stroke-width="1.7"/>
<polyline points="806.0,162.0 810.0,166.0 814.0,162.0" fill="none" stroke="#e8e8e8" stroke-width="1.9" stroke-linecap="round" stroke-linejoin="round"/>
<line x1="653.2" y1="202" x2="674.8" y2="202" stroke="#dedede" stroke-width="1.7"/>
<line x1="653.2" y1="214" x2="674.8" y2="214" stroke="#dedede" stroke-width="1.7"/>
<line x1="653.2" y1="208" x2="669" y2="208" stroke="#dedede" stroke-width="1.7"/>
<line x1="653.2" y1="220" x2="669" y2="220" stroke="#dedede" stroke-width="1.7"/>
<line x1="692.5" y1="202" x2="714" y2="202" stroke="#dedede" stroke-width="1.7"/>
<line x1="692.5" y1="214" x2="714" y2="214" stroke="#dedede" stroke-width="1.7"/>
<line x1="695.4" y1="208" x2="711" y2="208" stroke="#dedede" stroke-width="1.7"/>
<line x1="695.4" y1="220" x2="711" y2="220" stroke="#dedede" stroke-width="1.7"/>
<line x1="731" y1="202" x2="753" y2="202" stroke="#dedede" stroke-width="1.7"/>
<line x1="731" y1="214" x2="753" y2="214" stroke="#dedede" stroke-width="1.7"/>
<line x1="737" y1="208" x2="753" y2="208" stroke="#dedede" stroke-width="1.7"/>
<line x1="737" y1="220" x2="753" y2="220" stroke="#dedede" stroke-width="1.7"/>
<line x1="774" y1="202" x2="796" y2="202" stroke="#dedede" stroke-width="1.7"/>
<line x1="774" y1="220" x2="796" y2="220" stroke="#dedede" stroke-width="1.7"/>
<line x1="786.4" y1="208" x2="796" y2="208" stroke="#dedede" stroke-width="1.7"/>
<line x1="786.4" y1="214" x2="796" y2="214" stroke="#dedede" stroke-width="1.7"/>
<path d="M784,211 L775,211 M779,207 L775,211 L779,215" fill="none" stroke="#4aa3df" stroke-width="1.8"/>
<line x1="813" y1="202" x2="835" y2="202" stroke="#dedede" stroke-width="1.7"/>
<line x1="813" y1="220" x2="835" y2="220" stroke="#dedede" stroke-width="1.7"/>
<line x1="825" y1="208" x2="835" y2="208" stroke="#dedede" stroke-width="1.7"/>
<line x1="825" y1="214" x2="835" y2="214" stroke="#dedede" stroke-width="1.7"/>
<path d="M812,211 L821.5,211 M817.5,207 L821.5,211 L817.5,215" fill="none" stroke="#4aa3df" stroke-width="1.8"/>
<text x="870" y="163.5" font-family="Liberation Sans" font-size="14.5" fill="#d8d8d8" textLength="18" lengthAdjust="spacingAndGlyphs">ab</text><text x="870" y="175" font-family="Liberation Sans" font-size="14.5" fill="#d8d8d8">c</text>
<path d="M890,164.5 Q893,171 886,173 L879.5,173 M883,169.5 L879.5,173 L883,176.5" fill="none" stroke="#4aa3df" stroke-width="1.9" stroke-linecap="round"/>
<rect x="868" y="200" width="22" height="22" fill="none" stroke="#d8d8d8" stroke-width="1.5"/>
<line x1="879" y1="200" x2="879" y2="204.5" stroke="#d8d8d8" stroke-width="1.2"/><line x1="879" y1="217.5" x2="879" y2="222" stroke="#d8d8d8" stroke-width="1.2"/>
<rect x="868.5" y="204.5" width="21" height="13" fill="#1a2a38" stroke="#4aa3df" stroke-width="1.5"/>
<path d="M871.5,211 L886.5,211 M875,207.5 L871.5,211 L875,214.5 M883,207.5 L886.5,211 L883,214.5" fill="none" stroke="#6cb8ee" stroke-width="1.7"/>
<polyline points="1050.0,210.0 1054.0,214.0 1058.0,210.0" fill="none" stroke="#d9d9d9" stroke-width="1.9" stroke-linecap="round" stroke-linejoin="round"/>
<path d="M1066,269 L1066,258 L1077,258 M1069,261 L1076,268 M1076,263 L1076,268 L1071,268" fill="none" stroke="#cfcfcf" stroke-width="1.3"/>
<polyline points="1300.5,161.8 1305.0,166.2 1309.5,161.8" fill="none" stroke="#e0e0e0" stroke-width="1.9" stroke-linecap="round" stroke-linejoin="round"/>
<text x="1113" y="220.5" text-anchor="middle" font-family="Liberation Sans" font-size="23" fill="#d6d6d6">$</text>
<polyline points="1138.0,210.0 1142.0,214.0 1146.0,210.0" fill="none" stroke="#d9d9d9" stroke-width="1.9" stroke-linecap="round" stroke-linejoin="round"/>
<circle cx="1168.5" cy="205.5" r="4" fill="none" stroke="#d6d6d6" stroke-width="1.4"/><circle cx="1182" cy="218" r="4" fill="none" stroke="#d6d6d6" stroke-width="1.4"/><line x1="1168" y1="222.5" x2="1182.5" y2="201.5" stroke="#d6d6d6" stroke-width="1.4"/>
<circle cx="1215.2" cy="209.8" r="4.6" fill="#d6d6d6"/><path d="M1219.3,208 Q1221,216.5 1211.5,221.8 L1210.3,220.3 Q1216,216 1215.5,212.5 Z" fill="#d6d6d6"/>
<text x="1256.5" y="212.5" font-family="Liberation Sans" font-size="15" fill="#d6d6d6">0</text><text x="1248.5" y="223.5" font-family="Liberation Sans" font-size="15" fill="#d6d6d6" textLength="20.5" lengthAdjust="spacingAndGlyphs">.00</text>
<path d="M1257,206.7 L1246,206.7 M1250,202.5 L1246,206.7 L1250,211" fill="none" stroke="#4aa3df" stroke-width="1.7"/>
<text x="1287" y="212" font-family="Liberation Sans" font-size="15" fill="#d6d6d6" textLength="20.5" lengthAdjust="spacingAndGlyphs">.00</text><text x="1297" y="223.5" font-family="Liberation Sans" font-size="15" fill="#d6d6d6">0</text>
<path d="M1284,217.5 L1296,217.5 M1292,213.3 L1296,217.5 L1292,221.7" fill="none" stroke="#4aa3df" stroke-width="1.7"/>
<path d="M1308,269 L1308,258 L1319,258 M1311,261 L1318,268 M1318,263 L1318,268 L1313,268" fill="none" stroke="#cfcfcf" stroke-width="1.3"/>
<rect x="1349" y="145.5" width="40.5" height="33" fill="none" stroke="#d8d8d8" stroke-width="1.5"/>
<line x1="1349" y1="156.5" x2="1389.5" y2="156.5" stroke="#d8d8d8" stroke-width="1.3"/>
<line x1="1349" y1="167.5" x2="1389.5" y2="167.5" stroke="#d8d8d8" stroke-width="1.3"/>
<line x1="1362.5" y1="145.5" x2="1362.5" y2="178.5" stroke="#d8d8d8" stroke-width="1.3"/>
<line x1="1376.0" y1="145.5" x2="1376.0" y2="178.5" stroke="#d8d8d8" stroke-width="1.3"/>
<rect x="1355" y="156.5" width="38" height="11" fill="#1e7fd6" stroke="#6cb8ee" stroke-width="1.2"/>
<line x1="1368" y1="156.5" x2="1368" y2="167.5" stroke="#6cb8ee" stroke-width="1.2"/><line x1="1380.5" y1="156.5" x2="1380.5" y2="167.5" stroke="#6cb8ee" stroke-width="1.2"/>
<path d="M1366,162 L1346,162 M1354.5,152.5 L1345.5,162 L1354.5,171.5" fill="none" stroke="#5aaee8" stroke-width="1.5"/>
<polyline points="1364.0,224.0 1368.0,228.0 1372.0,224.0" fill="none" stroke="#d9d9d9" stroke-width="1.9" stroke-linecap="round" stroke-linejoin="round"/>
<rect x="1413.5" y="145.5" width="41" height="33" fill="none" stroke="#d8d8d8" stroke-width="1.5"/>
<line x1="1413.5" y1="156.5" x2="1454.5" y2="156.5" stroke="#d8d8d8" stroke-width="1.3"/>
<line x1="1413.5" y1="167.5" x2="1454.5" y2="167.5" stroke="#d8d8d8" stroke-width="1.3"/>
<line x1="1427.2" y1="145.5" x2="1427.2" y2="178.5" stroke="#d8d8d8" stroke-width="1.3"/>
<line x1="1440.8" y1="145.5" x2="1440.8" y2="178.5" stroke="#d8d8d8" stroke-width="1.3"/>
<rect x="1418.7" y="156.5" width="25" height="11" fill="#1e7fd6" stroke="#6cb8ee" stroke-width="1.2"/><line x1="1431" y1="156.5" x2="1431" y2="167.5" stroke="#6cb8ee" stroke-width="1.2"/>
<path d="M1440.5,154 L1457,171 M1457,154 L1440.5,171" stroke="#e5544c" stroke-width="1.7"/>
<polyline points="1429.5,224.0 1433.5,228.0 1437.5,224.0" fill="none" stroke="#d9d9d9" stroke-width="1.9" stroke-linecap="round" stroke-linejoin="round"/>
<rect x="1479.8" y="145.8" width="40.5" height="32.5" fill="none" stroke="#d8d8d8" stroke-width="1.5"/>
<path d="M1490,145.8 L1490,178.3 M1510.5,145.8 L1510.5,178.3 M1479.8,156.6 L1520.3,156.6 M1479.8,167.3 L1520.3,167.3" stroke="#d8d8d8" stroke-width="1.3"/>
<rect x="1490.5" y="157" width="19.5" height="10" fill="#1e7fd6" stroke="#6cb8ee" stroke-width="1.2"/>
<path d="M1488.5,139.8 L1511.5,139.8 M1488.5,137 L1488.5,142.5 M1511.5,137 L1511.5,142.5" stroke="#5aaee8" stroke-width="1.5"/>
<polyline points="1495.0,222.0 1499.0,226.0 1503.0,222.0" fill="none" stroke="#d9d9d9" stroke-width="1.9" stroke-linecap="round" stroke-linejoin="round"/>
<path d="M1584,145 L1566,145 L1575,152.5 L1566,160 L1584,160" fill="none" stroke="#d8d8d8" stroke-width="1.6" stroke-linejoin="round"/>
<polyline points="1695.0,151.0 1699.0,155.0 1703.0,151.0" fill="none" stroke="#d9d9d9" stroke-width="1.9" stroke-linecap="round" stroke-linejoin="round"/>
<rect x="1564.5" y="181" width="22" height="19" fill="none" stroke="#d8d8d8" stroke-width="1.5"/><line x1="1564.5" y1="185" x2="1586.5" y2="185" stroke="#d8d8d8" stroke-width="1.2"/>
<path d="M1575.5,187 L1575.5,197 M1571.5,193 L1575.5,197 L1579.5,193" fill="none" stroke="#4aa3df" stroke-width="1.5"/>
<polyline points="1620.0,188.0 1624.0,192.0 1628.0,188.0" fill="none" stroke="#d9d9d9" stroke-width="1.9" stroke-linecap="round" stroke-linejoin="round"/>
<path d="M1575,220 L1585,230 L1575,240 L1565,230 Z" fill="none" stroke="#c562d6" stroke-width="2"/><path d="M1565,230 L1570,225 L1580,235 L1575,240 Z" fill="#c562d6"/>
<polyline points="1638.0,226.0 1642.0,230.0 1646.0,226.0" fill="none" stroke="#d9d9d9" stroke-width="1.9" stroke-linecap="round" stroke-linejoin="round"/>
<path d="M1730.8,160.5 L1737.6,142.8 L1744.4,160.5 M1733,155 L1742.2,155" fill="none" stroke="#4aa3df" stroke-width="1.9"/>
<path d="M1731,163.8 L1743.5,163.8 L1731,181.2 L1744,181.2" fill="none" stroke="#d8d8d8" stroke-width="1.7" stroke-linejoin="miter"/>
<path d="M1748.5,152 L1771.5,152 L1771.5,155 L1763,165.5 L1763,175 L1757,175 L1757,165.5 L1748.5,155 Z" fill="none" stroke="#d8d8d8" stroke-width="1.6" stroke-linejoin="round"/>
<polyline points="1768.0,224.0 1772.0,228.0 1776.0,224.0" fill="none" stroke="#d9d9d9" stroke-width="1.9" stroke-linecap="round" stroke-linejoin="round"/>
<circle cx="1826.3" cy="157" r="15.2" fill="none" stroke="#d8d8d8" stroke-width="1.7"/><line x1="1815.5" y1="167.8" x2="1798.7" y2="184.5" stroke="#d8d8d8" stroke-width="1.7"/>
<polyline points="1842.0,224.0 1846.0,228.0 1850.0,224.0" fill="none" stroke="#d9d9d9" stroke-width="1.9" stroke-linecap="round" stroke-linejoin="round"/>
<rect x="1895.5" y="140.5" width="41" height="42" fill="none" stroke="#cf4b22" stroke-width="2.6"/>
<rect x="1895.5" y="140.5" width="41" height="42" fill="none" stroke="#5a2412" stroke-width="0.8"/>
<rect x="1900" y="146" width="14" height="14" fill="none" stroke="#cf4b22" stroke-width="2.6"/>
<rect x="1900" y="146" width="14" height="14" fill="none" stroke="#5a2412" stroke-width="0.8"/>
<rect x="1918" y="146" width="14" height="14" fill="none" stroke="#cf4b22" stroke-width="2.6"/>
<rect x="1918" y="146" width="14" height="14" fill="none" stroke="#5a2412" stroke-width="0.8"/>
<rect x="1900" y="164" width="14" height="14" fill="none" stroke="#cf4b22" stroke-width="2.6"/>
<rect x="1900" y="164" width="14" height="14" fill="none" stroke="#5a2412" stroke-width="0.8"/>
<rect x="1918" y="164" width="14" height="14" fill="none" stroke="#cf4b22" stroke-width="2.6"/>
<rect x="1918" y="164" width="14" height="14" fill="none" stroke="#5a2412" stroke-width="0.8"/>
<rect x="1990" y="141.5" width="41" height="41.5" fill="none" stroke="#dcdcdc" stroke-width="1.6"/>
<rect x="1991" y="142.5" width="39" height="4.5" fill="#8e8e8e"/>
<path d="M1990,147.8 L2031,147.8 M1990,159.5 L2031,159.5 M1990,170.5 L2031,170.5 M2002.5,170.5 L2002.5,183 M2016.5,170.5 L2016.5,183" stroke="#d0d0d0" stroke-width="1.3"/>
<circle cx="2008.4" cy="158.5" r="12.6" fill="#292929" stroke="#e2e2e2" stroke-width="1.8"/><line x1="2017.5" y1="167.5" x2="2030" y2="181.5" stroke="#e2e2e2" stroke-width="2"/>
<rect x="2001" y="156.5" width="4" height="8.3" fill="#9a9a9a"/><rect x="2005.8" y="150.5" width="4.6" height="14.3" fill="#292929" stroke="#e2e2e2" stroke-width="1.1"/><rect x="2011.6" y="153" width="4.3" height="11.8" fill="#2b8ad8" stroke="#7cc2f0" stroke-width="0.8"/>
<circle cx="2212" cy="199" r="56" fill="#ffffff"/>
<rect x="2182" y="173" width="61" height="53" fill="#5a5ce8"/>
<rect x="2190" y="181" width="18" height="14" fill="#fff"/><rect x="2216" y="181" width="18" height="14" fill="#fff"/><rect x="2190" y="203" width="18" height="14" fill="#fff"/><rect x="2216" y="203" width="18" height="14" fill="#fff"/>
<circle cx="2431.8" cy="180" r="13.8" fill="none" stroke="#fff" stroke-width="8"/>
<rect x="2424.3" y="158" width="15" height="12" fill="#292929"/>
<rect x="2428.3" y="155" width="7" height="27" rx="3.5" fill="#fff"/>
<polyline points="2850.5,253.8 2857.0,260.2 2863.5,253.8" fill="none" stroke="#e0e0e0" stroke-width="1.9" stroke-linecap="round" stroke-linejoin="round"/>
<path d="M2870.5,295 L2876,287.5 L2881.5,295 Z" fill="#9a9a9a" stroke="#9a9a9a" stroke-width="2.5" stroke-linejoin="round"/>
<path d="M2870.5,1654.5 L2876,1662 L2881.5,1654.5 Z" fill="#9a9a9a" stroke="#9a9a9a" stroke-width="2.5" stroke-linejoin="round"/>
<polyline points="54,1685 48,1692.5 54,1700" fill="none" stroke="#a8a8a8" stroke-width="1.6"/>
<polyline points="97,1685 103,1692.5 97,1700" fill="none" stroke="#a8a8a8" stroke-width="1.6"/>
<circle cx="2089.5" cy="1692.5" r="2" fill="#e0e0e0"/>
<circle cx="2095.5" cy="1692.5" r="2" fill="#e0e0e0"/>
<circle cx="2101.5" cy="1692.5" r="2" fill="#e0e0e0"/>
<path d="M2143,1684 L2143,1701 M2134.5,1692.5 L2151.5,1692.5" stroke="#e0e0e0" stroke-width="1.7"/>
<circle cx="2191.6" cy="1686.0" r="2" fill="#e0e0e0"/>
<circle cx="2191.6" cy="1692.5" r="2" fill="#e0e0e0"/>
<circle cx="2191.6" cy="1699.0" r="2" fill="#e0e0e0"/>
<path d="M2232,1686.5 L2224,1692.5 L2232,1698.5 Z" fill="#a0a0a0"/>
<path d="M2843,1686.5 L2851,1692.5 L2843,1698.5 Z" fill="#a0a0a0"/>
<path d="M100.5,1743.5 L100.5,1726.5 L120.5,1726.5 L120.5,1736" fill="none" stroke="#e0e0e0" stroke-width="1.5"/><line x1="100.5" y1="1729.5" x2="120.5" y2="1729.5" stroke="#e0e0e0" stroke-width="1.2"/>
<path d="M100.5,1743.5 L106,1743.5 M101,1735.5 L106,1735.5 M101,1739.2 L106,1739.2" stroke="#e0e0e0" stroke-width="1.3"/>
<circle cx="113.6" cy="1739" r="6" fill="#151515" stroke="#e0e0e0" stroke-width="1.6"/><circle cx="113.6" cy="1739" r="3" fill="#e0e0e0"/>
<circle cx="156" cy="1727" r="2.6" fill="none" stroke="#e8e8e8" stroke-width="1.5"/>
<path d="M147.5,1729.5 Q150,1734.5 154,1734 L156,1734 Q160,1734.5 164.5,1729.5" fill="none" stroke="#e8e8e8" stroke-width="1.7" stroke-linecap="round"/>
<path d="M155,1734 L153.5,1740 L150,1745" fill="none" stroke="#e8e8e8" stroke-width="1.7" stroke-linecap="round"/><path d="M157,1734 L157.5,1738" fill="none" stroke="#e8e8e8" stroke-width="1.7"/>
<path d="M158,1736 L166.5,1744.5 M166.5,1736 L158,1744.5" stroke="#e8e8e8" stroke-width="1.5"/>
<rect x="2465" y="1725" width="18" height="18" fill="none" stroke="#e0e0e0" stroke-width="1.5"/>
<line x1="2465" y1="1731.0" x2="2483" y2="1731.0" stroke="#e0e0e0" stroke-width="1.3"/>
<line x1="2465" y1="1737.0" x2="2483" y2="1737.0" stroke="#e0e0e0" stroke-width="1.3"/>
<line x1="2471.0" y1="1725" x2="2471.0" y2="1743" stroke="#e0e0e0" stroke-width="1.3"/>
<line x1="2477.0" y1="1725" x2="2477.0" y2="1743" stroke="#e0e0e0" stroke-width="1.3"/>
<rect x="2525" y="1726" width="20" height="17" fill="none" stroke="#e0e0e0" stroke-width="1.5"/><rect x="2529" y="1730" width="12" height="9" fill="none" stroke="#e0e0e0" stroke-width="1.3"/><line x1="2531" y1="1733" x2="2539" y2="1733" stroke="#e0e0e0"/><line x1="2531" y1="1736" x2="2539" y2="1736" stroke="#e0e0e0"/>
<rect x="2585" y="1726" width="20" height="17" fill="none" stroke="#e0e0e0" stroke-width="1.5"/><path d="M2591,1726 L2591,1735 L2599,1735 L2599,1726" fill="none" stroke="#e0e0e0" stroke-width="1.5"/>
<line x1="2633" y1="1734.5" x2="2644" y2="1734.5" stroke="#d0d0d0" stroke-width="1.4"/>
<path d="M2814,1728.5 L2814,1740.5 M2808,1734.5 L2820,1734.5" stroke="#d0d0d0" stroke-width="1.4"/></svg>
<div style="position:absolute;left:11.00px;top:277.90px;width:2849.00px;height:23.10px;background:#0a0a0a;"></div>
<svg style="left:0;top:0" width="2902" height="400"><polygon points="44,283 44,298 29,298" fill="#6b6b6b"/></svg>
<div style="position:absolute;left:47.00px;top:277.00px;width:26.00px;height:24.00px;background:#5c5c5c;"></div>
<div class="t" style="left:53.81px;top:282.08px;font-size:18.58px;color:#e8e8e8;">A</div>
<div style="position:absolute;left:72.50px;top:277.00px;width:1.00px;height:24.00px;background:#d0d0d0;"></div>
<div class="t" style="left:114.56px;top:282.08px;font-size:18.58px;color:#e8e8e8;">B</div>
<div style="position:absolute;left:168.00px;top:277.00px;width:1.00px;height:24.00px;background:#3d3d3d;"></div>
<div class="t" style="left:209.54px;top:282.08px;font-size:18.58px;color:#e8e8e8;">C</div>
<div style="position:absolute;left:263.50px;top:277.00px;width:1.00px;height:24.00px;background:#3d3d3d;"></div>
<div class="t" style="left:305.29px;top:282.08px;font-size:18.58px;color:#e8e8e8;">D</div>
<div style="position:absolute;left:359.50px;top:277.00px;width:1.00px;height:24.00px;background:#3d3d3d;"></div>
<div class="t" style="left:401.81px;top:282.08px;font-size:18.58px;color:#e8e8e8;">E</div>
<div style="position:absolute;left:455.50px;top:277.00px;width:1.00px;height:24.00px;background:#3d3d3d;"></div>
<div class="t" style="left:498.58px;top:282.08px;font-size:18.58px;color:#e8e8e8;">F</div>
<div style="position:absolute;left:552.00px;top:277.00px;width:1.00px;height:24.00px;background:#3d3d3d;"></div>
<div class="t" style="left:623.03px;top:282.08px;font-size:18.58px;color:#e8e8e8;">G</div>
<div style="position:absolute;left:707.50px;top:277.00px;width:1.00px;height:24.00px;background:#3d3d3d;"></div>
<div class="t" style="left:779.54px;top:282.08px;font-size:18.58px;color:#e8e8e8;">H</div>
<div style="position:absolute;left:864.00px;top:277.00px;width:1.00px;height:24.00px;background:#3d3d3d;"></div>
<div class="t" style="left:939.67px;top:282.08px;font-size:18.58px;color:#e8e8e8;">I</div>
<div style="position:absolute;left:1019.50px;top:277.00px;width:1.00px;height:24.00px;background:#3d3d3d;"></div>
<div class="t" style="left:1093.61px;top:282.08px;font-size:18.58px;color:#e8e8e8;">J</div>
<div style="position:absolute;left:1176.00px;top:277.00px;width:1.00px;height:24.00px;background:#3d3d3d;"></div>
<div class="t" style="left:1248.31px;top:282.08px;font-size:18.58px;color:#e8e8e8;">K</div>
<div style="position:absolute;left:1332.00px;top:277.00px;width:1.00px;height:24.00px;background:#3d3d3d;"></div>
<div class="t" style="left:1405.33px;top:282.08px;font-size:18.58px;color:#e8e8e8;">L</div>
<div style="position:absolute;left:1488.00px;top:277.00px;width:1.00px;height:24.00px;background:#3d3d3d;"></div>
<div class="t" style="left:1558.76px;top:282.08px;font-size:18.58px;color:#e8e8e8;">M</div>
<div style="position:absolute;left:1644.00px;top:277.00px;width:1.00px;height:24.00px;background:#3d3d3d;"></div>
<div class="t" style="left:1715.54px;top:282.08px;font-size:18.58px;color:#e8e8e8;">N</div>
<div style="position:absolute;left:1799.50px;top:277.00px;width:1.00px;height:24.00px;background:#3d3d3d;"></div>
<div class="t" style="left:1806.78px;top:282.08px;font-size:18.58px;color:#e8e8e8;">O</div>
<div style="position:absolute;left:1827.50px;top:277.00px;width:1.00px;height:24.00px;background:#3d3d3d;"></div>
<div class="t" style="left:1867.81px;top:282.08px;font-size:18.58px;color:#e8e8e8;">P</div>
<div style="position:absolute;left:1919.50px;top:277.00px;width:1.00px;height:24.00px;background:#3d3d3d;"></div>
<div class="t" style="left:1974.78px;top:282.08px;font-size:18.58px;color:#e8e8e8;">Q</div>
<div style="position:absolute;left:2043.50px;top:277.00px;width:1.00px;height:24.00px;background:#3d3d3d;"></div>
<div class="t" style="left:2083.29px;top:282.08px;font-size:18.58px;color:#e8e8e8;">R</div>
<div style="position:absolute;left:2135.50px;top:277.00px;width:1.00px;height:24.00px;background:#3d3d3d;"></div>
<div class="t" style="left:2175.81px;top:282.08px;font-size:18.58px;color:#e8e8e8;">S</div>
<div style="position:absolute;left:2227.50px;top:277.00px;width:1.00px;height:24.00px;background:#3d3d3d;"></div>
<div class="t" style="left:2268.58px;top:282.08px;font-size:18.58px;color:#e8e8e8;">T</div>
<div style="position:absolute;left:2320.00px;top:277.00px;width:1.00px;height:24.00px;background:#3d3d3d;"></div>
<div class="t" style="left:2359.79px;top:282.08px;font-size:18.58px;color:#e8e8e8;">U</div>
<div style="position:absolute;left:2412.00px;top:277.00px;width:1.00px;height:24.00px;background:#3d3d3d;"></div>
<div class="t" style="left:2452.31px;top:282.08px;font-size:18.58px;color:#e8e8e8;">V</div>
<div style="position:absolute;left:2504.00px;top:277.00px;width:1.00px;height:24.00px;background:#3d3d3d;"></div>
<div class="t" style="left:2541.48px;top:282.08px;font-size:18.58px;color:#e8e8e8;">W</div>
<div style="position:absolute;left:2595.50px;top:277.00px;width:1.00px;height:24.00px;background:#3d3d3d;"></div>
<div class="t" style="left:2636.06px;top:282.08px;font-size:18.58px;color:#e8e8e8;">X</div>
<div style="position:absolute;left:2688.00px;top:277.00px;width:1.00px;height:24.00px;background:#3d3d3d;"></div>
<div class="t" style="left:2728.06px;top:282.08px;font-size:18.58px;color:#e8e8e8;">Y</div>
<div style="position:absolute;left:2779.50px;top:277.00px;width:1.00px;height:24.00px;background:#3d3d3d;"></div>
<div class="t" style="left:2820.33px;top:282.08px;font-size:18.58px;color:#e8e8e8;">Z</div>
<div style="position:absolute;left:46.50px;top:277.00px;width:1.00px;height:24.00px;background:#d0d0d0;"></div>
<div style="position:absolute;left:47.00px;top:301.00px;width:2813.00px;height:1369.00px;background:#ffffff;"></div>
<div style="position:absolute;left:11.00px;top:301.00px;width:36.00px;height:1369.00px;background:#0a0a0a;"></div>
<div style="position:absolute;left:11.00px;top:301.00px;width:36.00px;height:37.00px;background:#666666;"></div>
<div style="position:absolute;left:11px;top:301px;width:36px;height:37px;overflow:hidden">
<div class="t" style="left:13.30px;top:16.86px;font-size:18.72px;color:#eeeeee;">1</div>
</div>
<div style="position:absolute;left:11.00px;top:337.50px;width:36.00px;height:1.00px;background:#d8d8d8;"></div>
<div style="position:absolute;left:11px;top:338px;width:36px;height:35px;overflow:hidden">
<div class="t" style="left:13.30px;top:14.86px;font-size:18.72px;color:#eeeeee;">2</div>
</div>
<div style="position:absolute;left:11.00px;top:372.50px;width:36.00px;height:1.00px;background:#5a5a5a;"></div>
<div style="position:absolute;left:11px;top:373px;width:36px;height:35px;overflow:hidden">
<div class="t" style="left:13.30px;top:14.86px;font-size:18.72px;color:#eeeeee;">3</div>
</div>
<div style="position:absolute;left:11.00px;top:407.50px;width:36.00px;height:1.00px;background:#5a5a5a;"></div>
<div style="position:absolute;left:11px;top:408px;width:36px;height:25px;overflow:hidden">
<div class="t" style="left:13.30px;top:4.86px;font-size:18.72px;color:#eeeeee;">4</div>
</div>
<div style="position:absolute;left:11.00px;top:432.50px;width:36.00px;height:1.00px;background:#d8d8d8;"></div>
<div style="position:absolute;left:11px;top:433px;width:36px;height:30px;overflow:hidden">
<div class="t" style="left:13.30px;top:9.86px;font-size:18.72px;color:#eeeeee;">5</div>
</div>
<div style="position:absolute;left:11.00px;top:462.50px;width:36.00px;height:1.00px;background:#5a5a5a;"></div>
<div style="position:absolute;left:11px;top:463px;width:36px;height:8px;overflow:hidden">
<div class="t" style="left:13.30px;top:-12.14px;font-size:18.72px;color:#eeeeee;">6</div>
</div>
<div style="position:absolute;left:11.00px;top:470.50px;width:36.00px;height:1.00px;background:#5a5a5a;"></div>
<div style="position:absolute;left:11px;top:471px;width:36px;height:30px;overflow:hidden">
<div class="t" style="left:13.30px;top:9.86px;font-size:18.72px;color:#eeeeee;">7</div>
</div>
<div style="position:absolute;left:11.00px;top:500.50px;width:36.00px;height:1.00px;background:#5a5a5a;"></div>
<div style="position:absolute;left:11px;top:501px;width:36px;height:26px;overflow:hidden">
<div class="t" style="left:13.30px;top:5.86px;font-size:18.72px;color:#eeeeee;">8</div>
</div>
<div style="position:absolute;left:11.00px;top:526.50px;width:36.00px;height:1.00px;background:#5a5a5a;"></div>
<div style="position:absolute;left:11px;top:527px;width:36px;height:36px;overflow:hidden">
<div class="t" style="left:13.30px;top:15.86px;font-size:18.72px;color:#eeeeee;">9</div>
</div>
<div style="position:absolute;left:11.00px;top:562.50px;width:36.00px;height:1.00px;background:#5a5a5a;"></div>
<div style="position:absolute;left:11px;top:563px;width:36px;height:37px;overflow:hidden">
<div class="t" style="left:8.09px;top:16.86px;font-size:18.72px;color:#eeeeee;">10</div>
</div>
<div style="position:absolute;left:11.00px;top:599.50px;width:36.00px;height:1.00px;background:#5a5a5a;"></div>
<div style="position:absolute;left:11px;top:600px;width:36px;height:37px;overflow:hidden">
<div class="t" style="left:8.79px;top:16.86px;font-size:18.72px;color:#eeeeee;">11</div>
</div>
<div style="position:absolute;left:11.00px;top:636.50px;width:36.00px;height:1.00px;background:#5a5a5a;"></div>
<div style="position:absolute;left:11px;top:637px;width:36px;height:37px;overflow:hidden">
<div class="t" style="left:8.09px;top:16.86px;font-size:18.72px;color:#eeeeee;">12</div>
</div>
<div style="position:absolute;left:11.00px;top:673.50px;width:36.00px;height:1.00px;background:#5a5a5a;"></div>
<div style="position:absolute;left:11px;top:674px;width:36px;height:37px;overflow:hidden">
<div class="t" style="left:8.09px;top:16.86px;font-size:18.72px;color:#eeeeee;">13</div>
</div>
<div style="position:absolute;left:11.00px;top:710.50px;width:36.00px;height:1.00px;background:#5a5a5a;"></div>
<div style="position:absolute;left:11px;top:711px;width:36px;height:37px;overflow:hidden">
<div class="t" style="left:8.09px;top:16.86px;font-size:18.72px;color:#eeeeee;">14</div>
</div>
<div style="position:absolute;left:11.00px;top:747.50px;width:36.00px;height:1.00px;background:#5a5a5a;"></div>
<div style="position:absolute;left:11px;top:748px;width:36px;height:37px;overflow:hidden">
<div class="t" style="left:8.09px;top:16.86px;font-size:18.72px;color:#eeeeee;">15</div>
</div>
<div style="position:absolute;left:11.00px;top:784.50px;width:36.00px;height:1.00px;background:#5a5a5a;"></div>
<div style="position:absolute;left:11px;top:785px;width:36px;height:37px;overflow:hidden">
<div class="t" style="left:8.09px;top:16.86px;font-size:18.72px;color:#eeeeee;">16</div>
</div>
<div style="position:absolute;left:11.00px;top:821.50px;width:36.00px;height:1.00px;background:#5a5a5a;"></div>
<div style="position:absolute;left:11px;top:822px;width:36px;height:37px;overflow:hidden">
<div class="t" style="left:8.09px;top:16.86px;font-size:18.72px;color:#eeeeee;">17</div>
</div>
<div style="position:absolute;left:11.00px;top:858.50px;width:36.00px;height:1.00px;background:#5a5a5a;"></div>
<div style="position:absolute;left:11px;top:859px;width:36px;height:37px;overflow:hidden">
<div class="t" style="left:8.09px;top:16.86px;font-size:18.72px;color:#eeeeee;">18</div>
</div>
<div style="position:absolute;left:11.00px;top:895.50px;width:36.00px;height:1.00px;background:#5a5a5a;"></div>
<div style="position:absolute;left:11px;top:896px;width:36px;height:37px;overflow:hidden">
<div class="t" style="left:8.09px;top:16.86px;font-size:18.72px;color:#eeeeee;">19</div>
</div>
<div style="position:absolute;left:11.00px;top:932.50px;width:36.00px;height:1.00px;background:#5a5a5a;"></div>
<div style="position:absolute;left:11px;top:933px;width:36px;height:37px;overflow:hidden">
<div class="t" style="left:8.09px;top:16.86px;font-size:18.72px;color:#eeeeee;">20</div>
</div>
<div style="position:absolute;left:11.00px;top:969.50px;width:36.00px;height:1.00px;background:#5a5a5a;"></div>
<div style="position:absolute;left:11px;top:970px;width:36px;height:37px;overflow:hidden">
<div class="t" style="left:8.09px;top:16.86px;font-size:18.72px;color:#eeeeee;">21</div>
</div>
<div style="position:absolute;left:11.00px;top:1006.50px;width:36.00px;height:1.00px;background:#5a5a5a;"></div>
<div style="position:absolute;left:11px;top:1007px;width:36px;height:37px;overflow:hidden">
<div class="t" style="left:8.09px;top:16.86px;font-size:18.72px;color:#eeeeee;">22</div>
</div>
<div style="position:absolute;left:11.00px;top:1043.50px;width:36.00px;height:1.00px;background:#5a5a5a;"></div>
<div style="position:absolute;left:11px;top:1044px;width:36px;height:37px;overflow:hidden">
<div class="t" style="left:8.09px;top:16.86px;font-size:18.72px;color:#eeeeee;">23</div>
</div>
<div style="position:absolute;left:11.00px;top:1080.50px;width:36.00px;height:1.00px;background:#5a5a5a;"></div>
<div style="position:absolute;left:11px;top:1081px;width:36px;height:37px;overflow:hidden">
<div class="t" style="left:8.09px;top:16.86px;font-size:18.72px;color:#eeeeee;">24</div>
</div>
<div style="position:absolute;left:11.00px;top:1117.50px;width:36.00px;height:1.00px;background:#5a5a5a;"></div>
<div style="position:absolute;left:11px;top:1118px;width:36px;height:37px;overflow:hidden">
<div class="t" style="left:8.09px;top:16.86px;font-size:18.72px;color:#eeeeee;">25</div>
</div>
<div style="position:absolute;left:11.00px;top:1154.50px;width:36.00px;height:1.00px;background:#5a5a5a;"></div>
<div style="position:absolute;left:11.00px;top:1157.50px;width:36.00px;height:1.00px;background:#5a5a5a;"></div>
<div style="position:absolute;left:11.00px;top:1160.50px;width:36.00px;height:1.00px;background:#5a5a5a;"></div>
<div style="position:absolute;left:11px;top:1161px;width:36px;height:34px;overflow:hidden">
<div class="t" style="left:8.09px;top:13.86px;font-size:18.72px;color:#eeeeee;">28</div>
</div>
<div style="position:absolute;left:11.00px;top:1194.50px;width:36.00px;height:1.00px;background:#5a5a5a;"></div>
<div style="position:absolute;left:11.00px;top:1199.50px;width:36.00px;height:1.00px;background:#5a5a5a;"></div>
<div style="position:absolute;left:11px;top:1200px;width:36px;height:35.5px;overflow:hidden">
<div class="t" style="left:8.09px;top:15.36px;font-size:18.72px;color:#eeeeee;">30</div>
</div>
<div style="position:absolute;left:11.00px;top:1235.00px;width:36.00px;height:1.00px;background:#5a5a5a;"></div>
<div style="position:absolute;left:11px;top:1235.5px;width:36px;height:35.0px;overflow:hidden">
<div class="t" style="left:8.09px;top:14.86px;font-size:18.72px;color:#eeeeee;">31</div>
</div>
<div style="position:absolute;left:11.00px;top:1270.00px;width:36.00px;height:1.00px;background:#5a5a5a;"></div>
<div style="position:absolute;left:11px;top:1270.5px;width:36px;height:35.5px;overflow:hidden">
<div class="t" style="left:8.09px;top:15.36px;font-size:18.72px;color:#eeeeee;">32</div>
</div>
<div style="position:absolute;left:11.00px;top:1305.50px;width:36.00px;height:1.00px;background:#5a5a5a;"></div>
<div style="position:absolute;left:11px;top:1306px;width:36px;height:35px;overflow:hidden">
<div class="t" style="left:8.09px;top:14.86px;font-size:18.72px;color:#eeeeee;">33</div>
</div>
<div style="position:absolute;left:11.00px;top:1340.50px;width:36.00px;height:1.00px;background:#5a5a5a;"></div>
<div style="position:absolute;left:11px;top:1341px;width:36px;height:36.5px;overflow:hidden">
<div class="t" style="left:8.09px;top:16.36px;font-size:18.72px;color:#eeeeee;">34</div>
</div>
<div style="position:absolute;left:11.00px;top:1377.00px;width:36.00px;height:1.00px;background:#5a5a5a;"></div>
<div style="position:absolute;left:11px;top:1377.5px;width:36px;height:29.5px;overflow:hidden">
<div class="t" style="left:8.09px;top:9.36px;font-size:18.72px;color:#eeeeee;">35</div>
</div>
<div style="position:absolute;left:11.00px;top:1406.50px;width:36.00px;height:1.00px;background:#5a5a5a;"></div>
<div style="position:absolute;left:11px;top:1407px;width:36px;height:37px;overflow:hidden">
<div class="t" style="left:8.09px;top:16.86px;font-size:18.72px;color:#eeeeee;">36</div>
</div>
<div style="position:absolute;left:11.00px;top:1443.50px;width:36.00px;height:1.00px;background:#5a5a5a;"></div>
<div style="position:absolute;left:11.00px;top:1448.50px;width:36.00px;height:1.00px;background:#5a5a5a;"></div>
<div style="position:absolute;left:11px;top:1449px;width:36px;height:35px;overflow:hidden">
<div class="t" style="left:8.09px;top:14.86px;font-size:18.72px;color:#eeeeee;">38</div>
</div>
<div style="position:absolute;left:11.00px;top:1483.50px;width:36.00px;height:1.00px;background:#5a5a5a;"></div>
<div style="position:absolute;left:11.00px;top:1488.50px;width:36.00px;height:1.00px;background:#5a5a5a;"></div>
<div style="position:absolute;left:11px;top:1489px;width:36px;height:35px;overflow:hidden">
<div class="t" style="left:8.09px;top:14.86px;font-size:18.72px;color:#eeeeee;">40</div>
</div>
<div style="position:absolute;left:11.00px;top:1523.50px;width:36.00px;height:1.00px;background:#5a5a5a;"></div>
<div style="position:absolute;left:11px;top:1524px;width:36px;height:35.5px;overflow:hidden">
<div class="t" style="left:8.09px;top:15.36px;font-size:18.72px;color:#eeeeee;">41</div>
</div>
<div style="position:absolute;left:11.00px;top:1559.00px;width:36.00px;height:1.00px;background:#5a5a5a;"></div>
<div style="position:absolute;left:11px;top:1559.5px;width:36px;height:35.0px;overflow:hidden">
<div class="t" style="left:8.09px;top:14.86px;font-size:18.72px;color:#eeeeee;">42</div>
</div>
<div style="position:absolute;left:11.00px;top:1594.00px;width:36.00px;height:1.00px;background:#5a5a5a;"></div>
<div style="position:absolute;left:11px;top:1594.5px;width:36px;height:29.5px;overflow:hidden">
<div class="t" style="left:8.09px;top:9.36px;font-size:18.72px;color:#eeeeee;">43</div>
</div>
<div style="position:absolute;left:11.00px;top:1623.50px;width:36.00px;height:1.00px;background:#5a5a5a;"></div>
<div style="position:absolute;left:11px;top:1624px;width:36px;height:25px;overflow:hidden">
<div class="t" style="left:8.09px;top:4.86px;font-size:18.72px;color:#eeeeee;">44</div>
</div>
<div style="position:absolute;left:11.00px;top:1648.50px;width:36.00px;height:1.00px;background:#5a5a5a;"></div>
<div style="position:absolute;left:11px;top:1649px;width:36px;height:21px;overflow:hidden">
<div class="t" style="left:8.09px;top:0.86px;font-size:18.72px;color:#eeeeee;">45</div>
</div>
<div style="position:absolute;left:11.00px;top:1669.50px;width:36.00px;height:1.00px;background:#5a5a5a;"></div>
<div style="position:absolute;left:11.00px;top:300.50px;width:36.00px;height:1.00px;background:#d8d8d8;"></div>
<div style="position:absolute;left:47.00px;top:301.00px;width:2.00px;height:37.00px;background:#1e7145;"></div>
<div style="position:absolute;left:47.00px;top:300.00px;width:26.00px;height:2.00px;background:#1e7145;"></div>
<div style="position:absolute;left:47.00px;top:432.60px;width:2813.00px;height:1.00px;background:#a0a0a0;"></div>
<div class="t" style="left:79.50px;top:303.92px;font-size:34.36px;font-weight:700;color:#232323;transform:scaleX(1.0476);transform-origin:left 0;-webkit-text-stroke:1.20px #232323;">Returns on Invested Capital</div>
<div class="t" style="left:78.00px;top:343.00px;font-size:28.35px;font-weight:700;color:#000;transform:scaleX(1.0541);transform-origin:left 0;-webkit-text-stroke:0.99px #000;">ABC Company Inc.</div>
<div class="t" style="left:76.00px;top:380.90px;font-size:20.67px;font-weight:700;color:#3377e6;transform:scaleX(0.9754);transform-origin:left 0;-webkit-text-stroke:0.72px #3377e6;">Go to Table of Contents</div>
<div style="position:absolute;left:76.00px;top:399.40px;width:227.00px;height:2.20px;background:#3377e6;"></div>
<div style="position:absolute;left:72.00px;top:433.60px;width:481.00px;height:29.90px;background:#4a4fd2;"></div>
<div style="position:absolute;left:72.00px;top:471.00px;width:481.00px;height:30.50px;background:#4bb3e7;"></div>
<div class="t" style="left:213.17px;top:436.79px;font-size:24.58px;font-weight:700;color:#fff;transform:scaleX(1.0091);transform-origin:center 0;-webkit-text-stroke:0.86px #fff;">Years to payback</div>
<div class="t" style="left:296.51px;top:474.19px;font-size:24.58px;font-weight:700;color:#fff;transform:scaleX(1.0535);transform-origin:center 0;-webkit-text-stroke:0.86px #fff;">1.6</div>
<div style="position:absolute;left:708.00px;top:433.60px;width:469.00px;height:29.90px;background:#4a4fd2;"></div>
<div style="position:absolute;left:708.00px;top:471.00px;width:469.00px;height:30.50px;background:#4bb3e7;"></div>
<div class="t" style="left:762.55px;top:436.79px;font-size:24.58px;font-weight:700;color:#fff;transform:scaleX(1.0428);transform-origin:center 0;-webkit-text-stroke:0.86px #fff;">5-Year Cash Generated ($'000)</div>
<div class="t" style="left:906.24px;top:474.19px;font-size:24.58px;font-weight:700;color:#fff;transform:scaleX(1.0729);transform-origin:center 0;-webkit-text-stroke:0.86px #fff;">3,918</div>
<div style="position:absolute;left:1332.20px;top:433.60px;width:468.60px;height:29.90px;background:#4a4fd2;"></div>
<div style="position:absolute;left:1332.20px;top:471.00px;width:468.60px;height:30.50px;background:#4bb3e7;"></div>
<div class="t" style="left:1497.51px;top:436.79px;font-size:24.58px;font-weight:700;color:#fff;transform:scaleX(1.0610);transform-origin:center 0;-webkit-text-stroke:0.86px #fff;">ROIC - 2030</div>
<div class="t" style="left:1532.15px;top:474.19px;font-size:24.58px;font-weight:700;color:#fff;transform:scaleX(1.1549);transform-origin:center 0;-webkit-text-stroke:0.86px #fff;">53.0%</div>
<div style="position:absolute;left:72.00px;top:527.00px;width:1728.80px;height:36.50px;background:#4a4fd2;"></div>
<div class="t" style="left:659.36px;top:532.35px;font-size:27.93px;font-weight:700;color:#fff;transform:scaleX(1.1224);transform-origin:center 0;-webkit-text-stroke:0.98px #fff;">Returns on Invested Capital Chart ($'000)</div>
<svg style="left:0;top:0" width="2902" height="1762">
<rect x="211.6" y="664.00" width="1587.9" height="1.2" fill="#79b3cc"/>
<rect x="211.6" y="722.62" width="1587.9" height="1.2" fill="#79b3cc"/>
<rect x="211.6" y="781.24" width="1587.9" height="1.2" fill="#79b3cc"/>
<rect x="211.6" y="839.86" width="1587.9" height="1.2" fill="#79b3cc"/>
<rect x="211.6" y="898.48" width="1587.9" height="1.2" fill="#79b3cc"/>
<rect x="211.6" y="1015.72" width="1587.9" height="1.2" fill="#79b3cc"/>
<rect x="248.90" y="901.50" width="121.7" height="56.10" fill="#4bb3e7"/>
<rect x="566.48" y="893.12" width="121.7" height="64.48" fill="#4bb3e7"/>
<rect x="688.18" y="945.76" width="122.6" height="11.84" fill="#f07b6f"/>
<rect x="884.06" y="861.81" width="121.7" height="95.79" fill="#4bb3e7"/>
<rect x="1005.76" y="922.90" width="122.6" height="34.70" fill="#f07b6f"/>
<rect x="1201.64" y="794.87" width="121.7" height="162.73" fill="#4bb3e7"/>
<rect x="1323.34" y="887.37" width="122.6" height="70.23" fill="#f07b6f"/>
<rect x="1519.22" y="682.09" width="121.7" height="275.51" fill="#4bb3e7"/>
<rect x="1640.92" y="841.47" width="122.6" height="116.13" fill="#f07b6f"/>
<rect x="211.6" y="956.90" width="1587.9" height="2" fill="#5d9dc0"/>
<rect x="210.60" y="957.60" width="2" height="8" fill="#5d9dc0"/>
<rect x="528.18" y="957.60" width="2" height="8" fill="#5d9dc0"/>
<rect x="845.76" y="957.60" width="2" height="8" fill="#5d9dc0"/>
<rect x="1163.34" y="957.60" width="2" height="8" fill="#5d9dc0"/>
<rect x="1480.92" y="957.60" width="2" height="8" fill="#5d9dc0"/>
<rect x="1798.50" y="957.60" width="2" height="8" fill="#5d9dc0"/>
<polyline points="370.4,968.0 688.0,866.2 1005.6,746.8 1323.1,690.8 1640.7,697.9" fill="none" stroke="#2fb6a7" stroke-width="4.5" stroke-linejoin="round"/>
<circle cx="370.4" cy="968.0" r="39.5" fill="#2fb6a7"/>
<circle cx="688.0" cy="866.2" r="39.5" fill="#2fb6a7"/>
<circle cx="1005.6" cy="746.8" r="39.5" fill="#2fb6a7"/>
<circle cx="1323.1" cy="690.8" r="39.5" fill="#2fb6a7"/>
<circle cx="1640.7" cy="697.9" r="39.5" fill="#2fb6a7"/>
<rect x="278" y="596" width="46" height="12.7" fill="#4bb3e7"/>
<rect x="775" y="596" width="45.7" height="12.7" fill="#f07b6f"/>
<rect x="1479" y="599.5" width="49" height="4" fill="#2fb6a7"/>
<circle cx="1502.5" cy="601.5" r="7.5" fill="#2fb6a7"/>
</svg>
<div class="t" style="left:329.60px;top:589.47px;font-size:24.02px;font-weight:700;color:#000;transform:scaleX(1.0710);transform-origin:left 0;-webkit-text-stroke:0.84px #000;-webkit-text-stroke:0.84px #000;">Total Invested Capital</div>
<div class="t" style="left:826.00px;top:589.47px;font-size:24.02px;font-weight:700;color:#000;transform:scaleX(1.0777);transform-origin:left 0;-webkit-text-stroke:0.84px #000;-webkit-text-stroke:0.84px #000;">Net Operating Profit After Tax (NOPAT)</div>
<div class="t" style="left:1532.50px;top:589.47px;font-size:24.02px;font-weight:700;color:#000;transform:scaleX(1.0490);transform-origin:left 0;-webkit-text-stroke:0.84px #000;-webkit-text-stroke:0.84px #000;">ROIC</div>
<div class="t" style="left:138.37px;top:654.95px;font-size:19.55px;font-weight:700;color:#000;transform:scaleX(1.0933);transform-origin:right 0;-webkit-text-stroke:0.68px #000;-webkit-text-stroke:0.68px #000;">5,000</div>
<div class="t" style="left:138.37px;top:713.57px;font-size:19.55px;font-weight:700;color:#000;transform:scaleX(1.0933);transform-origin:right 0;-webkit-text-stroke:0.68px #000;-webkit-text-stroke:0.68px #000;">4,000</div>
<div class="t" style="left:138.37px;top:772.19px;font-size:19.55px;font-weight:700;color:#000;transform:scaleX(1.0933);transform-origin:right 0;-webkit-text-stroke:0.68px #000;-webkit-text-stroke:0.68px #000;">3,000</div>
<div class="t" style="left:138.37px;top:830.81px;font-size:19.55px;font-weight:700;color:#000;transform:scaleX(1.0933);transform-origin:right 0;-webkit-text-stroke:0.68px #000;-webkit-text-stroke:0.68px #000;">2,000</div>
<div class="t" style="left:138.37px;top:889.43px;font-size:19.55px;font-weight:700;color:#000;transform:scaleX(1.0933);transform-origin:right 0;-webkit-text-stroke:0.68px #000;-webkit-text-stroke:0.68px #000;">1,000</div>
<div class="t" style="left:181.49px;top:948.05px;font-size:19.55px;font-weight:700;color:#000;-webkit-text-stroke:0.68px #000;-webkit-text-stroke:0.68px #000;">-</div>
<div class="t" style="left:131.75px;top:1006.65px;font-size:19.55px;font-weight:700;color:#000;transform:scaleX(1.1621);transform-origin:right 0;-webkit-text-stroke:0.68px #000;-webkit-text-stroke:0.68px #000;">(1,000)</div>
<div class="t" style="left:346.62px;top:1070.91px;font-size:21.37px;font-weight:700;color:#000;transform:scaleX(1.1654);transform-origin:center 0;-webkit-text-stroke:0.75px #000;-webkit-text-stroke:0.75px #000;">2026</div>
<div class="t" style="left:664.20px;top:1070.91px;font-size:21.37px;font-weight:700;color:#000;transform:scaleX(1.1654);transform-origin:center 0;-webkit-text-stroke:0.75px #000;-webkit-text-stroke:0.75px #000;">2027</div>
<div class="t" style="left:981.78px;top:1070.91px;font-size:21.37px;font-weight:700;color:#000;transform:scaleX(1.1654);transform-origin:center 0;-webkit-text-stroke:0.75px #000;-webkit-text-stroke:0.75px #000;">2028</div>
<div class="t" style="left:1299.36px;top:1070.91px;font-size:21.37px;font-weight:700;color:#000;transform:scaleX(1.1654);transform-origin:center 0;-webkit-text-stroke:0.75px #000;-webkit-text-stroke:0.75px #000;">2029</div>
<div class="t" style="left:1616.94px;top:1070.91px;font-size:21.37px;font-weight:700;color:#000;transform:scaleX(1.1654);transform-origin:center 0;-webkit-text-stroke:0.75px #000;-webkit-text-stroke:0.75px #000;">2030</div>
<div class="t" style="left:343.39px;top:959.13px;font-size:20.67px;font-weight:700;color:#fff;transform:scaleX(1.1482);transform-origin:center 0;-webkit-text-stroke:0.72px #fff;-webkit-text-stroke:0.72px #fff;">-0.6%</div>
<div class="t" style="left:658.66px;top:857.32px;font-size:20.67px;font-weight:700;color:#fff;transform:scaleX(1.0578);transform-origin:center 0;-webkit-text-stroke:0.72px #fff;-webkit-text-stroke:0.72px #fff;">19.6%</div>
<div class="t" style="left:976.24px;top:737.87px;font-size:20.67px;font-weight:700;color:#fff;transform:scaleX(1.0578);transform-origin:center 0;-webkit-text-stroke:0.72px #fff;-webkit-text-stroke:0.72px #fff;">43.3%</div>
<div class="t" style="left:1293.82px;top:681.93px;font-size:20.67px;font-weight:700;color:#fff;transform:scaleX(1.0578);transform-origin:center 0;-webkit-text-stroke:0.72px #fff;-webkit-text-stroke:0.72px #fff;">54.4%</div>
<div class="t" style="left:1611.40px;top:688.98px;font-size:20.67px;font-weight:700;color:#fff;transform:scaleX(1.0578);transform-origin:center 0;-webkit-text-stroke:0.72px #fff;-webkit-text-stroke:0.72px #fff;">53.0%</div>
<div style="position:absolute;left:72.00px;top:1118.00px;width:1728.80px;height:37.00px;background:#4a4fd2;"></div>
<div class="t" style="left:697.99px;top:1123.82px;font-size:28.21px;font-weight:700;color:#fff;transform:scaleX(1.1142);transform-origin:center 0;-webkit-text-stroke:0.99px #fff;">Returns on Invested Capital ($'000)</div>
<div style="position:absolute;left:73.00px;top:1160.20px;width:1727.50px;height:34.80px;background:#6e74e8;"></div>
<div style="position:absolute;left:1019.00px;top:1160.20px;width:2.00px;height:34.80px;background:#ffffff;"></div>
<div style="position:absolute;left:1175.50px;top:1160.20px;width:2.00px;height:34.80px;background:#ffffff;"></div>
<div style="position:absolute;left:1331.50px;top:1160.20px;width:2.00px;height:34.80px;background:#ffffff;"></div>
<div style="position:absolute;left:1487.50px;top:1160.20px;width:2.00px;height:34.80px;background:#ffffff;"></div>
<div style="position:absolute;left:1643.50px;top:1160.20px;width:2.00px;height:34.80px;background:#ffffff;"></div>
<div class="t" style="left:85.60px;top:1168.04px;font-size:20.39px;font-weight:700;color:#fff;transform:scaleX(0.9604);transform-origin:left 0;-webkit-text-stroke:0.71px #fff;">Fiscal Year</div>
<div class="t" style="left:1077.43px;top:1168.46px;font-size:18.72px;font-weight:700;color:#fff;transform:scaleX(1.1289);transform-origin:center 0;-webkit-text-stroke:0.66px #fff;">2026</div>
<div class="t" style="left:1233.68px;top:1168.46px;font-size:18.72px;font-weight:700;color:#fff;transform:scaleX(1.1289);transform-origin:center 0;-webkit-text-stroke:0.66px #fff;">2027</div>
<div class="t" style="left:1389.68px;top:1168.46px;font-size:18.72px;font-weight:700;color:#fff;transform:scaleX(1.1289);transform-origin:center 0;-webkit-text-stroke:0.66px #fff;">2028</div>
<div class="t" style="left:1545.68px;top:1168.46px;font-size:18.72px;font-weight:700;color:#fff;transform:scaleX(1.1289);transform-origin:center 0;-webkit-text-stroke:0.66px #fff;">2029</div>
<div class="t" style="left:1701.68px;top:1168.46px;font-size:18.72px;font-weight:700;color:#fff;transform:scaleX(1.1289);transform-origin:center 0;-webkit-text-stroke:0.66px #fff;">2030</div>
<div class="t" style="left:94.80px;top:1208.56px;font-size:18.72px;color:#000;transform:scaleX(0.9572);transform-origin:left 0;">Debts</div>
<div class="t" style="left:1133.77px;top:1208.56px;font-size:18.72px;color:#000;">283</div>
<div class="t" style="left:1289.77px;top:1208.56px;font-size:18.72px;color:#000;">237</div>
<div class="t" style="left:1445.77px;top:1208.56px;font-size:18.72px;color:#000;">190</div>
<div class="t" style="left:1601.77px;top:1208.56px;font-size:18.72px;color:#000;">141</div>
<div class="t" style="left:1768.18px;top:1208.56px;font-size:18.72px;color:#000;">90</div>
<div class="t" style="left:94.80px;top:1243.56px;font-size:18.72px;color:#000;transform:scaleX(0.9785);transform-origin:left 0;">Equity</div>
<div class="t" style="left:1133.77px;top:1243.56px;font-size:18.72px;color:#000;">674</div>
<div class="t" style="left:1289.77px;top:1243.56px;font-size:18.72px;color:#000;">863</div>
<div class="t" style="left:1430.16px;top:1243.56px;font-size:18.72px;color:#000;">1,444</div>
<div class="t" style="left:1586.16px;top:1243.56px;font-size:18.72px;color:#000;">2,635</div>
<div class="t" style="left:1743.55px;top:1243.56px;font-size:18.72px;color:#000;">4,611</div>
<div style="position:absolute;left:72.00px;top:1269.90px;width:1728.80px;height:36.10px;background:#4bb3e7;"></div>
<div class="t" style="left:77.50px;top:1277.37px;font-size:23.18px;font-weight:700;color:#fff;transform:scaleX(1.0193);transform-origin:left 0;-webkit-text-stroke:0.81px #fff;">Total Invested Capital</div>
<div class="t" style="left:1129.11px;top:1278.79px;font-size:21.51px;font-weight:700;color:#fff;-webkit-text-stroke:0.75px #fff;">957</div>
<div class="t" style="left:1267.17px;top:1278.79px;font-size:21.51px;font-weight:700;color:#fff;-webkit-text-stroke:0.75px #fff;">1,100</div>
<div class="t" style="left:1423.17px;top:1278.79px;font-size:21.51px;font-weight:700;color:#fff;-webkit-text-stroke:0.75px #fff;">1,634</div>
<div class="t" style="left:1579.17px;top:1278.79px;font-size:21.51px;font-weight:700;color:#fff;-webkit-text-stroke:0.75px #fff;">2,776</div>
<div class="t" style="left:1735.17px;top:1278.79px;font-size:21.51px;font-weight:700;color:#fff;-webkit-text-stroke:0.75px #fff;">4,700</div>
<div class="t" style="left:94.80px;top:1314.45px;font-size:19.55px;color:#000;transform:scaleX(0.9665);transform-origin:left 0;">Net Operating Profit After Tax (NOPAT)</div>
<div class="t" style="left:1149.13px;top:1315.16px;font-size:18.72px;color:#000;">(6)</div>
<div class="t" style="left:1289.77px;top:1315.16px;font-size:18.72px;color:#000;">202</div>
<div class="t" style="left:1445.77px;top:1315.16px;font-size:18.72px;color:#000;">592</div>
<div class="t" style="left:1586.16px;top:1315.16px;font-size:18.72px;color:#000;">1,198</div>
<div class="t" style="left:1742.16px;top:1315.16px;font-size:18.72px;color:#000;">1,981</div>
<div style="position:absolute;left:72.00px;top:1341.00px;width:1728.80px;height:36.50px;background:#4bb3e7;"></div>
<div class="t" style="left:77.50px;top:1349.51px;font-size:21.37px;font-weight:700;color:#fff;transform:scaleX(1.0950);transform-origin:left 0;-webkit-text-stroke:0.75px #fff;">ROIC</div>
<div class="t" style="left:1115.81px;top:1349.39px;font-size:21.51px;font-weight:700;color:#fff;-webkit-text-stroke:0.75px #fff;">-0.6%</div>
<div class="t" style="left:1267.01px;top:1349.39px;font-size:21.51px;font-weight:700;color:#fff;-webkit-text-stroke:0.75px #fff;">19.6%</div>
<div class="t" style="left:1423.01px;top:1349.39px;font-size:21.51px;font-weight:700;color:#fff;-webkit-text-stroke:0.75px #fff;">43.3%</div>
<div class="t" style="left:1579.01px;top:1349.39px;font-size:21.51px;font-weight:700;color:#fff;-webkit-text-stroke:0.75px #fff;">54.4%</div>
<div class="t" style="left:1735.01px;top:1349.39px;font-size:21.51px;font-weight:700;color:#fff;-webkit-text-stroke:0.75px #fff;">53.0%</div>
<div style="position:absolute;left:72.00px;top:1407.30px;width:1728.80px;height:36.50px;background:#4a4fd2;"></div>
<div class="t" style="left:717.26px;top:1412.62px;font-size:28.21px;font-weight:700;color:#fff;transform:scaleX(1.0856);transform-origin:center 0;-webkit-text-stroke:0.99px #fff;">Payback Period Analysis ($'000)</div>
<div style="position:absolute;left:73.00px;top:1449.20px;width:1727.50px;height:34.30px;background:#6e74e8;"></div>
<div style="position:absolute;left:1019.00px;top:1449.20px;width:2.00px;height:34.30px;background:#ffffff;"></div>
<div style="position:absolute;left:1175.50px;top:1449.20px;width:2.00px;height:34.30px;background:#ffffff;"></div>
<div style="position:absolute;left:1331.50px;top:1449.20px;width:2.00px;height:34.30px;background:#ffffff;"></div>
<div style="position:absolute;left:1487.50px;top:1449.20px;width:2.00px;height:34.30px;background:#ffffff;"></div>
<div style="position:absolute;left:1643.50px;top:1449.20px;width:2.00px;height:34.30px;background:#ffffff;"></div>
<div class="t" style="left:85.60px;top:1457.04px;font-size:20.39px;font-weight:700;color:#fff;transform:scaleX(0.9604);transform-origin:left 0;-webkit-text-stroke:0.71px #fff;">Fiscal Year</div>
<div class="t" style="left:1077.43px;top:1457.46px;font-size:18.72px;font-weight:700;color:#fff;transform:scaleX(1.1289);transform-origin:center 0;-webkit-text-stroke:0.66px #fff;">2026</div>
<div class="t" style="left:1233.68px;top:1457.46px;font-size:18.72px;font-weight:700;color:#fff;transform:scaleX(1.1289);transform-origin:center 0;-webkit-text-stroke:0.66px #fff;">2027</div>
<div class="t" style="left:1389.68px;top:1457.46px;font-size:18.72px;font-weight:700;color:#fff;transform:scaleX(1.1289);transform-origin:center 0;-webkit-text-stroke:0.66px #fff;">2028</div>
<div class="t" style="left:1545.68px;top:1457.46px;font-size:18.72px;font-weight:700;color:#fff;transform:scaleX(1.1289);transform-origin:center 0;-webkit-text-stroke:0.66px #fff;">2029</div>
<div class="t" style="left:1701.68px;top:1457.46px;font-size:18.72px;font-weight:700;color:#fff;transform:scaleX(1.1289);transform-origin:center 0;-webkit-text-stroke:0.66px #fff;">2030</div>
<div class="t" style="left:94.80px;top:1497.86px;font-size:18.72px;color:#000;transform:scaleX(1.0200);transform-origin:left 0;">Net Profit After Tax</div>
<div class="t" style="left:1149.13px;top:1497.86px;font-size:18.72px;color:#000;">(6)</div>
<div class="t" style="left:1289.77px;top:1497.86px;font-size:18.72px;color:#000;">202</div>
<div class="t" style="left:1445.77px;top:1497.86px;font-size:18.72px;color:#000;">592</div>
<div class="t" style="left:1586.16px;top:1497.86px;font-size:18.72px;color:#000;">1,198</div>
<div class="t" style="left:1742.16px;top:1497.86px;font-size:18.72px;color:#000;">1,981</div>
<div class="t" style="left:94.80px;top:1532.66px;font-size:18.72px;color:#000;transform:scaleX(0.8338);transform-origin:left 0;">CAPEX</div>
<div class="t" style="left:1138.72px;top:1532.66px;font-size:18.72px;color:#000;">(50)</div>
<div class="t" style="left:1313.27px;top:1532.66px;font-size:18.72px;color:#000;">-</div>
<div class="t" style="left:1469.27px;top:1532.66px;font-size:18.72px;color:#000;">-</div>
<div class="t" style="left:1625.27px;top:1532.66px;font-size:18.72px;color:#000;">-</div>
<div class="t" style="left:1781.27px;top:1532.66px;font-size:18.72px;color:#000;">-</div>
<div style="position:absolute;left:72.00px;top:1559.50px;width:1728.80px;height:35.30px;background:#4bb3e7;"></div>
<div class="t" style="left:77.50px;top:1567.50px;font-size:22.21px;font-weight:700;color:#fff;transform:scaleX(1.0419);transform-origin:left 0;-webkit-text-stroke:0.78px #fff;">Cumulative Cash Generated (Spent)</div>
<div class="t" style="left:1133.75px;top:1568.09px;font-size:21.51px;font-weight:700;color:#fff;-webkit-text-stroke:0.75px #fff;">(55)</div>
<div class="t" style="left:1285.11px;top:1568.09px;font-size:21.51px;font-weight:700;color:#fff;-webkit-text-stroke:0.75px #fff;">147</div>
<div class="t" style="left:1441.11px;top:1568.09px;font-size:21.51px;font-weight:700;color:#fff;-webkit-text-stroke:0.75px #fff;">739</div>
<div class="t" style="left:1579.17px;top:1568.09px;font-size:21.51px;font-weight:700;color:#fff;-webkit-text-stroke:0.75px #fff;">1,937</div>
<div class="t" style="left:1735.17px;top:1568.09px;font-size:21.51px;font-weight:700;color:#fff;-webkit-text-stroke:0.75px #fff;">3,918</div>
<div class="t" style="left:76.60px;top:1600.86px;font-size:18.72px;font-weight:700;color:#1a1a1a;transform:scaleX(1.0370);transform-origin:left 0;-webkit-text-stroke:0.66px #1a1a1a;">Payback year</div>
<div style="position:absolute;left:1176.40px;top:1596.50px;width:156.40px;height:28.50px;background:#2fb6a7;"></div>
<div class="t" style="left:1095.13px;top:1601.16px;font-size:18.72px;font-weight:700;color:#111;-webkit-text-stroke:0.66px #111;">-</div>
<div class="t" style="left:1249.30px;top:1600.86px;font-size:18.72px;font-weight:700;color:#111;-webkit-text-stroke:0.66px #111;">1</div>
<div class="t" style="left:1407.38px;top:1601.16px;font-size:18.72px;font-weight:700;color:#111;-webkit-text-stroke:0.66px #111;">-</div>
<div class="t" style="left:1563.38px;top:1601.16px;font-size:18.72px;font-weight:700;color:#111;-webkit-text-stroke:0.66px #111;">-</div>
<div class="t" style="left:1719.38px;top:1601.16px;font-size:18.72px;font-weight:700;color:#111;-webkit-text-stroke:0.66px #111;">-</div>
</body></html>
